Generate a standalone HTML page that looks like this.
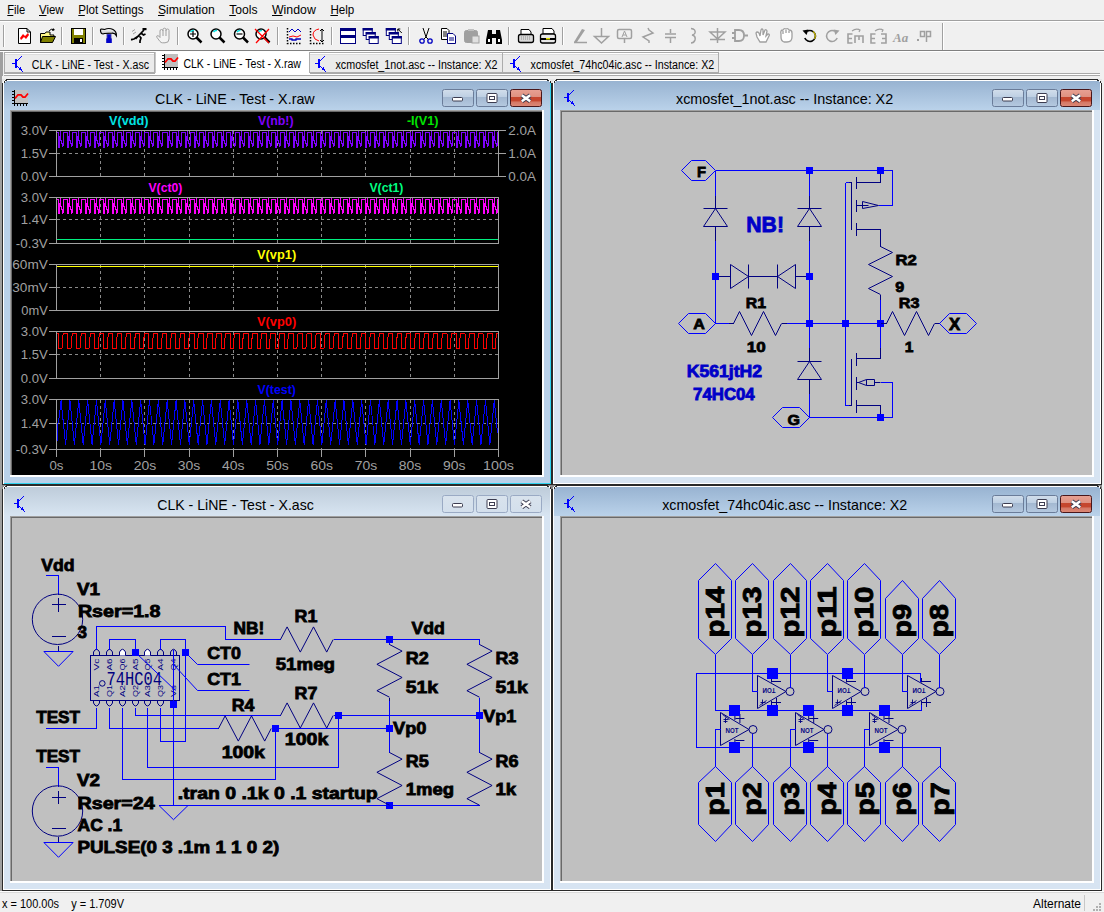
<!DOCTYPE html><html><head><meta charset="utf-8"><style>html,body{margin:0;padding:0;background:#F0F0F0;overflow:hidden}svg{display:block}</style></head><body><svg width="1104" height="912" viewBox="0 0 1104 912"><rect x="0" y="0" width="1104" height="912" fill="#F0F0F0" />
<text x="7.3" y="14" font-family="Liberation Sans" font-size="12" font-weight="normal" fill="#000" text-anchor="start" textLength="18" lengthAdjust="spacingAndGlyphs" >File</text>
<rect x="7.3" y="15" width="6" height="1" fill="#000" />
<text x="39" y="14" font-family="Liberation Sans" font-size="12" font-weight="normal" fill="#000" text-anchor="start" textLength="24.6" lengthAdjust="spacingAndGlyphs" >View</text>
<rect x="39" y="15" width="7.5" height="1" fill="#000" />
<text x="78.3" y="14" font-family="Liberation Sans" font-size="12" font-weight="normal" fill="#000" text-anchor="start" textLength="65.2" lengthAdjust="spacingAndGlyphs" >Plot Settings</text>
<rect x="78.3" y="15" width="6.5" height="1" fill="#000" />
<text x="158" y="14" font-family="Liberation Sans" font-size="12" font-weight="normal" fill="#000" text-anchor="start" textLength="56.8" lengthAdjust="spacingAndGlyphs" >Simulation</text>
<rect x="158" y="15" width="6.5" height="1" fill="#000" />
<text x="229.3" y="14" font-family="Liberation Sans" font-size="12" font-weight="normal" fill="#000" text-anchor="start" textLength="28.3" lengthAdjust="spacingAndGlyphs" >Tools</text>
<rect x="229.3" y="15" width="6.5" height="1" fill="#000" />
<text x="272" y="14" font-family="Liberation Sans" font-size="12" font-weight="normal" fill="#000" text-anchor="start" textLength="43.8" lengthAdjust="spacingAndGlyphs" >Window</text>
<rect x="272" y="15" width="10.5" height="1" fill="#000" />
<text x="330.4" y="14" font-family="Liberation Sans" font-size="12" font-weight="normal" fill="#000" text-anchor="start" textLength="23.9" lengthAdjust="spacingAndGlyphs" >Help</text>
<rect x="330.4" y="15" width="7.5" height="1" fill="#000" />
<rect x="0" y="20" width="1104" height="1" fill="#A0A0A0" />
<rect x="0" y="21" width="1104" height="1" fill="#FFFFFF" />
<rect x="3" y="25" width="1" height="22" fill="#A0A0A0" />
<rect x="4" y="25" width="1" height="22" fill="#FFFFFF" />
<rect x="61" y="27" width="1" height="18" fill="#A0A0A0" />
<rect x="62" y="27" width="1" height="18" fill="#FFFFFF" />
<rect x="92" y="27" width="1" height="18" fill="#A0A0A0" />
<rect x="93" y="27" width="1" height="18" fill="#FFFFFF" />
<rect x="123" y="27" width="1" height="18" fill="#A0A0A0" />
<rect x="124" y="27" width="1" height="18" fill="#FFFFFF" />
<rect x="177" y="27" width="1" height="18" fill="#A0A0A0" />
<rect x="178" y="27" width="1" height="18" fill="#FFFFFF" />
<rect x="277" y="27" width="1" height="18" fill="#A0A0A0" />
<rect x="278" y="27" width="1" height="18" fill="#FFFFFF" />
<rect x="331" y="27" width="1" height="18" fill="#A0A0A0" />
<rect x="332" y="27" width="1" height="18" fill="#FFFFFF" />
<rect x="408" y="27" width="1" height="18" fill="#A0A0A0" />
<rect x="409" y="27" width="1" height="18" fill="#FFFFFF" />
<rect x="508" y="27" width="1" height="18" fill="#A0A0A0" />
<rect x="509" y="27" width="1" height="18" fill="#FFFFFF" />
<rect x="562" y="27" width="1" height="18" fill="#A0A0A0" />
<rect x="563" y="27" width="1" height="18" fill="#FFFFFF" />
<rect x="942" y="23" width="1" height="27" fill="#A0A0A0" />
<rect x="943" y="23" width="1" height="27" fill="#FFFFFF" />
<rect x="0" y="50" width="1104" height="1" fill="#808080" />
<rect x="0" y="51" width="1104" height="1" fill="#FFFFFF" />
<g transform="translate(17,28)"><path d="M1.5 0.5 H10 L13.5 4 V15.5 H1.5 Z" fill="#fff" stroke="#000"/><path d="M10 0.5 V4 H13.5" fill="none" stroke="#000"/><path d="M3 10 L6 6 L8 8 L11 5 L12 7 L9 11 L7 9 L4 12 Z" fill="#f00"/></g>
<g transform="translate(40,28)"><path d="M0.5 5.5 H5 L6 4 H10 V7 H14 L12 14.5 H0.5 Z" fill="#fff88a" stroke="#000"/><path d="M2.5 8.5 H15.5 L12.5 14.5 H0.5 Z" fill="#808000" stroke="#000"/><path d="M9 3 Q11 0 14 2" fill="none" stroke="#000"/><path d="M13 0 L15 2 L12 3" fill="#000"/></g>
<g transform="translate(71,28)"><rect x="0.5" y="0.5" width="14" height="15" fill="#808000" stroke="#000"/><rect x="3" y="1" width="9" height="6" fill="#fff"/><rect x="3" y="10" width="9" height="5" fill="#000"/><rect x="9" y="11" width="2" height="3" fill="#fff"/></g>
<defs><linearGradient id="ghm" x1="0" y1="0" x2="0" y2="1"><stop offset="0" stop-color="#fff"/><stop offset="1" stop-color="#a8a8a8"/></linearGradient></defs>
<g transform="translate(100,28)"><path d="M0.5 2 Q0.8 0.6 2.5 1.2 L4.5 1.5 Q9 -0.5 13 1.5 Q16.6 3.5 16.4 7.6 Q15 5 12 5.2 L4.5 5.5 Q3 6.3 1.5 5.5 Q0.4 4.5 0.5 2 Z" fill="url(#ghm)" stroke="#000" stroke-width="1.2"/><rect x="7.2" y="6.2" width="3.6" height="5" fill="#0000c8"/><rect x="6.2" y="10.5" width="5.6" height="4.5" fill="#0000c8"/><path d="M7 6 V11 M11 6 V11" stroke="#000080" stroke-width="0.6"/></g>
<g transform="translate(131,28)"><rect x="11.5" y="0" width="4" height="2.2" fill="#000"/><path d="M13 2 L4.5 10.8 M7.5 8 L3 11 L0.8 11.5 V12.5 M8.5 8.2 L10 10 L9 13 V15 M10.5 5.5 L12.5 7 L14.5 6" fill="none" stroke="#000" stroke-width="1.7"/><path d="M1 3.5 L4 1.5 M2 6 L5 4" stroke="#a0a0a0" stroke-width="1"/></g>
<g transform="translate(156,28)"><path d="M4 8.5 V3 Q4 1.5 5.5 1.5 Q7 1.5 7 3 V1.5 Q7 0.2 8.5 0.2 Q10 0.2 10 1.5 V2.5 Q10 1 11.5 1 Q13 1 13 2.5 V11 Q13 14.8 9 14.8 H6.5 Q5 14.8 4 13.5 L0.8 9.2 Q0.3 7.6 1.8 7.6 Q2.8 7.6 4 9.5 Z M7 3 V8 M10 2 V8" fill="#F4F4F4" stroke="#a0a0a0" stroke-width="1"/></g>
<g transform="translate(187,28)"><circle cx="6" cy="6" r="5" fill="#fff" stroke="#000" stroke-width="1.5"/><path d="M3.5 4 Q5 2 7 2.5" stroke="#00e0e0" stroke-width="1.5" fill="none"/><path d="M9.5 9.5 L14.5 14.5" stroke="#000" stroke-width="2.5"/><path d="M3 6 H9 M6 3 V9" stroke="#000" stroke-width="1.2"/></g>
<g transform="translate(210,28)"><circle cx="6" cy="6" r="5" fill="#fff" stroke="#000" stroke-width="1.5"/><path d="M3.5 4 Q5 2 7 2.5" stroke="#00e0e0" stroke-width="1.5" fill="none"/><path d="M9.5 9.5 L14.5 14.5" stroke="#000" stroke-width="2.5"/></g>
<g transform="translate(233.5,28)"><circle cx="6" cy="6" r="5" fill="#fff" stroke="#000" stroke-width="1.5"/><path d="M3.5 4 Q5 2 7 2.5" stroke="#00e0e0" stroke-width="1.5" fill="none"/><path d="M9.5 9.5 L14.5 14.5" stroke="#000" stroke-width="2.5"/><path d="M3 6 H9" stroke="#000" stroke-width="1.2"/></g>
<g transform="translate(255,28)"><circle cx="6" cy="6" r="5" fill="#fff" stroke="#000" stroke-width="1.5"/><path d="M3.5 4 Q5 2 7 2.5" stroke="#00e0e0" stroke-width="1.5" fill="none"/><path d="M9.5 9.5 L14.5 14.5" stroke="#000" stroke-width="2.5"/><path d="M0 1 L14 15 M14 1 L1 15" stroke="#f00" stroke-width="1.3"/></g>
<g transform="translate(286,28)"><path d="M1.5 0 V15.5 H16" stroke="#000" stroke-dasharray="1.5,1.5" stroke-width="1.5" fill="none"/><path d="M3 4 L6 1 L9 4 L12 1 L15 4" stroke="#0000c0" fill="none"/><path d="M3 9 L7 8 L11 9 L15 7" stroke="#f00" fill="none"/><path d="M3 11 H6 V12 H10 V11 H15" stroke="#0000c0" fill="none" stroke-width="1.3"/></g>
<g transform="translate(309,28)"><path d="M1.5 0 V15.5 H16" stroke="#000" stroke-dasharray="1.5,1.5" stroke-width="1.5" fill="none"/><path d="M10 1 Q4 2 4 7 Q5 12 10 13" stroke="#f00" fill="none"/><path d="M13 1 V14 M11 3 L13 1 L15 3 M11 12 L13 14 L15 12" stroke="#000" fill="none"/></g>
<g transform="translate(340,28)"><rect x="0.5" y="0.5" width="15" height="15" fill="#fff" stroke="#00007f"/><rect x="0" y="0" width="16" height="3" fill="#00007f"/><rect x="0" y="7" width="16" height="3" fill="#00007f"/></g>
<g transform="translate(362.7,28)"><rect x="0.5" y="0.5" width="9" height="7" fill="#fff" stroke="#00007f"/><rect x="0" y="0" width="10" height="2.5" fill="#00007f"/><rect x="3.5" y="4.5" width="9" height="7" fill="#fff" stroke="#00007f"/><rect x="3" y="4" width="10" height="2.5" fill="#00007f"/><rect x="6.5" y="8.5" width="9" height="7" fill="#fff" stroke="#00007f"/><rect x="6" y="8" width="10" height="2.5" fill="#00007f"/></g>
<g transform="translate(385.8,28)"><rect x="0.5" y="0.5" width="9" height="7" fill="#fff" stroke="#00007f"/><rect x="0" y="0" width="10" height="2.5" fill="#00007f"/><rect x="3.5" y="4.5" width="9" height="7" fill="#fff" stroke="#00007f"/><rect x="3" y="4" width="10" height="2.5" fill="#00007f"/><rect x="6.5" y="8.5" width="9" height="7" fill="#fff" stroke="#00007f"/><rect x="6" y="8" width="10" height="2.5" fill="#00007f"/><path d="M12 1 L16 5 M12 1 H14.5 M12 1 V3.5" stroke="#000" fill="none"/></g>
<g transform="translate(419,28)"><path d="M4 0 L7 9 M10 0 L7 9 L4 12 M7 9 L10 12" stroke="#000" fill="none"/><circle cx="3" cy="13" r="2.2" fill="none" stroke="#0000c0" stroke-width="1.3"/><circle cx="11" cy="13" r="2.2" fill="none" stroke="#0000c0" stroke-width="1.3"/></g>
<g transform="translate(441,28)"><path d="M0.5 0.5 H6 L8 2.5 V11.5 H0.5 Z" fill="#fff" stroke="#000"/><path d="M2 4 H6 M2 6 H6 M2 8 H6" stroke="#000"/><path d="M6.5 5.5 H12 L14.5 8 V15.5 H6.5 Z" fill="#fff" stroke="#00007f"/><path d="M8 10 H13 M8 12 H13" stroke="#00007f"/></g>
<g transform="translate(464,28)"><rect x="0.5" y="2.5" width="13" height="12" rx="2" fill="#a0a0a0" stroke="#a0a0a0"/><rect x="4" y="1" width="6" height="2" fill="#c0c0c0"/><rect x="8" y="8" width="7" height="7" fill="#e0e0e0" stroke="#a0a0a0"/></g>
<g transform="translate(486,28)"><path d="M2 2 H6 V6 H10 V2 H14 L16 12 V16 H10 V10 H6 V16 H0 V12 Z" fill="#000"/><rect x="2" y="11" width="2" height="3" fill="#fff"/><rect x="12" y="11" width="2" height="3" fill="#fff"/></g>
<g transform="translate(518,28)"><path d="M3 1.5 H11 L13 4 V7 H3 Z" fill="#fff" stroke="#000"/><rect x="0.5" y="6.5" width="15" height="8" rx="2" fill="#d8d8d8" stroke="#000" stroke-width="1.3"/><path d="M3 9 H13 M3 11 H13" stroke="#909090" stroke-dasharray="1,1"/></g>
<g transform="translate(540,28)"><path d="M3 0.5 H12 L14 3 V6 H3 Z" fill="#fff" stroke="#000"/><rect x="0.5" y="6" width="15" height="9" rx="2" fill="#e8e8e8" stroke="#000" stroke-width="1.3"/><rect x="1" y="10" width="14" height="2" fill="#000"/><rect x="6" y="10" width="4" height="1.5" fill="#e0e000"/></g>
<g transform="translate(573,28)"><path d="M1 14 L9 1 L12 2 L4 14 Z" fill="#a0a0a0"/><path d="M1 14.5 H14" stroke="#a0a0a0" stroke-width="1.5"/></g>
<g transform="translate(594,28)"><path d="M7.5 0 V8 M0.5 8.5 H14.5 L7.5 15 Z" stroke="#a0a0a0" fill="none" stroke-width="1.5"/></g>
<g transform="translate(617,28)"><rect x="0.5" y="1.5" width="14" height="9" rx="1.5" fill="none" stroke="#a0a0a0" stroke-width="1.5"/><path d="M5 9 L7.5 3 L10 9 M6 7 H9" stroke="#a0a0a0" fill="none"/><path d="M7.5 11 V15" stroke="#a0a0a0" stroke-width="1.5"/></g>
<g transform="translate(642,28)"><path d="M6 0 L7 2 L11 5 L1 9 L7 13 L7 15" stroke="#a0a0a0" fill="none" stroke-width="1.5"/></g>
<g transform="translate(665,28)"><path d="M5.5 1 V5 M0 6 H11 M0 9.5 H11 M5.5 10 V15" stroke="#a0a0a0" fill="none" stroke-width="1.5"/></g>
<g transform="translate(690,28)"><path d="M1 0.5 Q6 1 5 5 Q4 7 2 7 Q6 8 5 12 Q4 15 1 15" stroke="#a0a0a0" fill="none" stroke-width="1.5"/></g>
<g transform="translate(710,28)"><path d="M7.5 0 V15 M0 4 H15 L7.5 11 Z M0 11.5 H15" stroke="#a0a0a0" fill="none" stroke-width="1.5"/></g>
<g transform="translate(732,28)"><path d="M3 2 H7 Q12 2 12 7.5 Q12 13 7 13 H3 Z M0 5 H3 M0 10 H3 M12 7.5 H16" stroke="#a0a0a0" fill="none" stroke-width="1.8"/></g>
<g transform="translate(755,28)"><path d="M2 9 L1 5 Q2 3 4 5 L5 8 L6 2 Q7 0 8 2 V7 L10 2 Q11 1 12 3 L11 8 L13 6 Q15 6 14 8 L11 14 H5 Z" fill="#fff" stroke="#a0a0a0" stroke-width="1.3"/></g>
<g transform="translate(779,28)"><path d="M2 6 Q1 2 4 2 Q5 0 7 1 Q9 0 10 2 Q13 2 13 5 V9 Q13 14 8 14 H5 Q2 13 2 9 Z M4 6 V3 M7 5 V2 M10 5 V3" fill="#fff" stroke="#a0a0a0" stroke-width="1.3"/></g>
<g transform="translate(802,28)"><path d="M5.2 3.2 A5.5 5.5 0 1 1 2.8 10" stroke="#000" fill="none" stroke-width="1.6"/><path d="M11 3.5 A5.5 5.5 0 0 1 12.5 11" stroke="#d0c000" fill="none" stroke-width="1.2"/><path d="M0.5 2.5 L6.5 1.5 L4.5 7 Z" fill="#000"/></g>
<g transform="translate(825,28)"><path d="M9.8 3.2 A5.5 5.5 0 1 0 12.2 10" stroke="#a0a0a0" fill="none" stroke-width="1.5"/><path d="M14.5 2.5 L8.5 1.5 L10.5 7 Z" fill="#a0a0a0"/></g>
<g transform="translate(847,28)"><path d="M5 3 Q9 0 13 2 M11 1 L13 2 L12 4" stroke="#a0a0a0" fill="none" stroke-width="1.2"/><path d="M5.5 6 H1 V15 H5.5 M1 10.5 H5 M8 15 V8 H16 V15 M12 8 V12" stroke="#a0a0a0" fill="none" stroke-width="1.6"/></g>
<g transform="translate(870,28)"><path d="M5 3 Q9 0 13 2 M11 1 L13 2 L12 4" stroke="#a0a0a0" fill="none" stroke-width="1.2"/><path d="M5.5 6 H1 V15 H5.5 M1 10.5 H5 M11 6 H16 V15 H11 M12 10.5 H16" stroke="#a0a0a0" fill="none" stroke-width="1.6"/></g>
<g transform="translate(893,28)"><text x="0" y="14" font-family="Liberation Serif" font-style="italic" font-weight="bold" font-size="13" fill="#a0a0a0">Aa</text></g>
<g transform="translate(917,28)"><rect x="0" y="11" width="2" height="2" fill="#a0a0a0"/><rect x="3.5" y="3.5" width="4" height="5" fill="none" stroke="#a0a0a0" stroke-width="1.5"/><path d="M9.5 14 V3.5 H13.5 V8.5 H9.5" fill="none" stroke="#a0a0a0" stroke-width="1.5"/></g>
<rect x="2" y="52" width="1" height="24" fill="#A0A0A0" />
<rect x="4" y="73" width="1096" height="3" fill="#FFFFFF" />
<rect x="4" y="73" width="1096" height="1" fill="#A9A9A9" />
<rect x="4" y="75" width="1096" height="1" fill="#A9A9A9" />
<rect x="4" y="52" width="151" height="21" fill="#ACACAC" />
<rect x="5" y="53" width="149" height="19" fill="#FFFFFF" />
<rect x="5" y="55" width="149" height="17" fill="#EBEBEB" />
<rect x="5" y="54" width="149" height="1" fill="#DCDCDC" />
<rect x="155" y="52" width="155" height="22" fill="#FFFFFF" />
<rect x="155" y="52" width="1" height="21" fill="#C8C8C8" />
<rect x="309" y="52" width="1" height="21" fill="#C8C8C8" />
<rect x="309" y="52" width="194" height="21" fill="#ACACAC" />
<rect x="310" y="53" width="192" height="19" fill="#FFFFFF" />
<rect x="310" y="55" width="192" height="17" fill="#EBEBEB" />
<rect x="310" y="54" width="192" height="1" fill="#DCDCDC" />
<rect x="502" y="52" width="217" height="21" fill="#ACACAC" />
<rect x="503" y="53" width="215" height="19" fill="#FFFFFF" />
<rect x="503" y="55" width="215" height="17" fill="#EBEBEB" />
<rect x="503" y="54" width="215" height="1" fill="#DCDCDC" />
<g transform="translate(12,56)" fill="#0000ff" shape-rendering="crispEdges"><rect x="3" y="3" width="2" height="9"/><rect x="0" y="7" width="3" height="1"/><rect x="5" y="4" width="1" height="1"/><rect x="6" y="3" width="1" height="1"/><rect x="7" y="2" width="1" height="1"/><rect x="8" y="1" width="1" height="1"/><rect x="9" y="0" width="1" height="1"/><rect x="5" y="10" width="1" height="1"/><rect x="6" y="11" width="1" height="1"/><rect x="7" y="12" width="1" height="1"/><rect x="8" y="11" width="1" height="3"/><rect x="7" y="13" width="3" height="1"/><rect x="9" y="13" width="1" height="2"/><rect x="10" y="15" width="1" height="1"/></g>
<text x="31.8" y="69" font-family="Liberation Sans" font-size="12" font-weight="normal" fill="#000" text-anchor="start" textLength="117.2" lengthAdjust="spacingAndGlyphs" >CLK - LiNE - Test - X.asc</text>
<g transform="translate(162,54)"><rect x="3" y="0" width="13" height="13" fill="#c0c0c0"/><g fill="#000" shape-rendering="crispEdges"><rect x="2" y="0" width="1" height="14"/><rect x="0" y="13" width="16" height="1"/><rect x="0" y="1" width="2" height="1"/><rect x="0" y="4" width="2" height="1"/><rect x="0" y="7" width="2" height="1"/><rect x="0" y="10" width="2" height="1"/><rect x="2" y="14" width="1" height="2"/><rect x="5" y="14" width="1" height="2"/><rect x="8" y="14" width="1" height="2"/><rect x="11" y="14" width="1" height="2"/><rect x="14" y="14" width="1" height="2"/></g><path d="M3 8.5 L6 4.8 H9 L11 7.2 H13 L16 3.5" stroke="#f00" stroke-width="1.8" fill="none"/></g>
<text x="183.4" y="68" font-family="Liberation Sans" font-size="12" font-weight="normal" fill="#000" text-anchor="start" textLength="117.6" lengthAdjust="spacingAndGlyphs" >CLK - LiNE - Test - X.raw</text>
<g transform="translate(315,56)" fill="#0000ff" shape-rendering="crispEdges"><rect x="3" y="3" width="2" height="9"/><rect x="0" y="7" width="3" height="1"/><rect x="5" y="4" width="1" height="1"/><rect x="6" y="3" width="1" height="1"/><rect x="7" y="2" width="1" height="1"/><rect x="8" y="1" width="1" height="1"/><rect x="9" y="0" width="1" height="1"/><rect x="5" y="10" width="1" height="1"/><rect x="6" y="11" width="1" height="1"/><rect x="7" y="12" width="1" height="1"/><rect x="8" y="11" width="1" height="3"/><rect x="7" y="13" width="3" height="1"/><rect x="9" y="13" width="1" height="2"/><rect x="10" y="15" width="1" height="1"/></g>
<text x="335.5" y="69" font-family="Liberation Sans" font-size="12" font-weight="normal" fill="#000" text-anchor="start" textLength="162" lengthAdjust="spacingAndGlyphs" >xcmosfet_1not.asc -- Instance: X2</text>
<g transform="translate(510,56)" fill="#0000ff" shape-rendering="crispEdges"><rect x="3" y="3" width="2" height="9"/><rect x="0" y="7" width="3" height="1"/><rect x="5" y="4" width="1" height="1"/><rect x="6" y="3" width="1" height="1"/><rect x="7" y="2" width="1" height="1"/><rect x="8" y="1" width="1" height="1"/><rect x="9" y="0" width="1" height="1"/><rect x="5" y="10" width="1" height="1"/><rect x="6" y="11" width="1" height="1"/><rect x="7" y="12" width="1" height="1"/><rect x="8" y="11" width="1" height="3"/><rect x="7" y="13" width="3" height="1"/><rect x="9" y="13" width="1" height="2"/><rect x="10" y="15" width="1" height="1"/></g>
<text x="530.6" y="69" font-family="Liberation Sans" font-size="12" font-weight="normal" fill="#000" text-anchor="start" textLength="183.7" lengthAdjust="spacingAndGlyphs" >xcmosfet_74hc04ic.asc -- Instance: X2</text>
<defs><linearGradient id="gact" x1="0" y1="0" x2="0" y2="1"><stop offset="0" stop-color="#98B3D1"/><stop offset="1" stop-color="#BAD2EA"/></linearGradient><linearGradient id="ginact" x1="0" y1="0" x2="0" y2="1"><stop offset="0" stop-color="#BECCDA"/><stop offset="1" stop-color="#D8E5F2"/></linearGradient><linearGradient id="gclose" x1="0" y1="0" x2="0" y2="1"><stop offset="0" stop-color="#E8A193"/><stop offset="0.45" stop-color="#DE9080"/><stop offset="0.46" stop-color="#C5462E"/><stop offset="0.7" stop-color="#C5462E"/><stop offset="0.71" stop-color="#D47563"/><stop offset="1" stop-color="#DC8A78"/></linearGradient><linearGradient id="gbtn" x1="0" y1="0" x2="0" y2="1"><stop offset="0" stop-color="#D2DEEB"/><stop offset="0.45" stop-color="#BDCFE3"/><stop offset="0.46" stop-color="#A3B8D1"/><stop offset="1" stop-color="#B5C9E0"/></linearGradient><linearGradient id="gbtni" x1="0" y1="0" x2="0" y2="1"><stop offset="0" stop-color="#D9E3ED"/><stop offset="1" stop-color="#D3DFEC"/></linearGradient></defs>
<rect x="2" y="79" width="550" height="406" fill="#2A2A2A" />
<rect x="3" y="80" width="548" height="404" fill="#FFFFFF" />
<rect x="4" y="81" width="546" height="402" fill="#B9D1EA" />
<rect x="550" y="82" width="1" height="402" fill="#2ED3F0" />
<rect x="4" y="483" width="547" height="1" fill="#2ED3F0" />
<rect x="4" y="81" width="546" height="29" fill="url(#gact)" />
<rect x="10" y="110" width="534" height="367" fill="#FFFFFF" />
<rect x="10" y="110" width="532" height="365" fill="#A0A0A0" />
<rect x="11" y="111" width="531" height="364" fill="#696969" />
<rect x="12" y="112" width="530" height="363" fill="#000000" />
<g transform="translate(12,90)"><rect x="3" y="0" width="13" height="13" fill="#c0c0c0"/><g fill="#000" shape-rendering="crispEdges"><rect x="2" y="0" width="1" height="14"/><rect x="0" y="13" width="16" height="1"/><rect x="0" y="1" width="2" height="1"/><rect x="0" y="4" width="2" height="1"/><rect x="0" y="7" width="2" height="1"/><rect x="0" y="10" width="2" height="1"/><rect x="2" y="14" width="1" height="2"/><rect x="5" y="14" width="1" height="2"/><rect x="8" y="14" width="1" height="2"/><rect x="11" y="14" width="1" height="2"/><rect x="14" y="14" width="1" height="2"/></g><path d="M3 8.5 L6 4.8 H9 L11 7.2 H13 L16 3.5" stroke="#f00" stroke-width="1.8" fill="none"/></g>
<text x="155.1" y="103.6" font-family="Liberation Sans" font-size="15" font-weight="normal" fill="#000" text-anchor="start" textLength="159.6" lengthAdjust="spacingAndGlyphs" >CLK - LiNE - Test - X.raw</text>
<rect x="442.5" y="89.5" width="31" height="17" rx="2" fill="url(#gbtn)" stroke="#6A7C99"/>
<rect x="452.5" y="97.5" width="10" height="3.5" rx="1" fill="#fff" stroke="#3C3C50"/>
<rect x="476.5" y="89.5" width="31" height="17" rx="2" fill="url(#gbtn)" stroke="#6A7C99"/>
<rect x="487" y="93.5" width="10" height="9" rx="1" fill="#fff" stroke="#3C3C50"/><rect x="489.5" y="96.5" width="5" height="3" fill="none" stroke="#3C3C50"/>
<rect x="510.5" y="89.5" width="31" height="17" rx="2" fill="url(#gclose)" stroke="#48171B"/>
<path d="M521.8 95.2 L530.2 101.2 M530.2 95.2 L521.8 101.2" stroke="#3C3C50" stroke-width="4.4" stroke-linecap="butt"/><path d="M521.8 95.2 L530.2 101.2 M530.2 95.2 L521.8 101.2" stroke="#fff" stroke-width="2.6" stroke-linecap="butt"/>
<rect x="552" y="79" width="550" height="406" fill="#2A2A2A" />
<rect x="553" y="80" width="548" height="404" fill="#FFFFFF" />
<rect x="554" y="81" width="546" height="402" fill="#D7E4F2" />
<rect x="554" y="81" width="546" height="29" fill="url(#gact)" />
<rect x="560" y="110" width="534" height="367" fill="#FFFFFF" />
<rect x="560" y="110" width="532" height="365" fill="#A0A0A0" />
<rect x="561" y="111" width="531" height="364" fill="#696969" />
<rect x="562" y="112" width="530" height="363" fill="#C0C0C0" />
<g transform="translate(564,90)" fill="#0000ff" shape-rendering="crispEdges"><rect x="3" y="3" width="2" height="9"/><rect x="0" y="7" width="3" height="1"/><rect x="5" y="4" width="1" height="1"/><rect x="6" y="3" width="1" height="1"/><rect x="7" y="2" width="1" height="1"/><rect x="8" y="1" width="1" height="1"/><rect x="9" y="0" width="1" height="1"/><rect x="5" y="10" width="1" height="1"/><rect x="6" y="11" width="1" height="1"/><rect x="7" y="12" width="1" height="1"/><rect x="8" y="11" width="1" height="3"/><rect x="7" y="13" width="3" height="1"/><rect x="9" y="13" width="1" height="2"/><rect x="10" y="15" width="1" height="1"/></g>
<text x="676" y="103.6" font-family="Liberation Sans" font-size="15" font-weight="normal" fill="#000" text-anchor="start" textLength="217.2" lengthAdjust="spacingAndGlyphs" >xcmosfet_1not.asc -- Instance: X2</text>
<rect x="992.5" y="89.5" width="31" height="17" rx="2" fill="url(#gbtn)" stroke="#6A7C99"/>
<rect x="1002.5" y="97.5" width="10" height="3.5" rx="1" fill="#fff" stroke="#3C3C50"/>
<rect x="1026.5" y="89.5" width="31" height="17" rx="2" fill="url(#gbtn)" stroke="#6A7C99"/>
<rect x="1037" y="93.5" width="10" height="9" rx="1" fill="#fff" stroke="#3C3C50"/><rect x="1039.5" y="96.5" width="5" height="3" fill="none" stroke="#3C3C50"/>
<rect x="1060.5" y="89.5" width="31" height="17" rx="2" fill="url(#gclose)" stroke="#48171B"/>
<path d="M1071.8 95.2 L1080.2 101.2 M1080.2 95.2 L1071.8 101.2" stroke="#3C3C50" stroke-width="4.4" stroke-linecap="butt"/><path d="M1071.8 95.2 L1080.2 101.2 M1080.2 95.2 L1071.8 101.2" stroke="#fff" stroke-width="2.6" stroke-linecap="butt"/>
<rect x="2" y="485" width="550" height="406" fill="#2A2A2A" />
<rect x="3" y="486" width="548" height="404" fill="#FFFFFF" />
<rect x="4" y="487" width="546" height="402" fill="#D7E4F2" />
<rect x="4" y="487" width="546" height="29" fill="url(#ginact)" />
<rect x="10" y="516" width="534" height="367" fill="#FFFFFF" />
<rect x="10" y="516" width="532" height="365" fill="#A0A0A0" />
<rect x="11" y="517" width="531" height="364" fill="#696969" />
<rect x="12" y="518" width="530" height="363" fill="#C0C0C0" />
<g transform="translate(14,496)" fill="#0000ff" shape-rendering="crispEdges"><rect x="3" y="3" width="2" height="9"/><rect x="0" y="7" width="3" height="1"/><rect x="5" y="4" width="1" height="1"/><rect x="6" y="3" width="1" height="1"/><rect x="7" y="2" width="1" height="1"/><rect x="8" y="1" width="1" height="1"/><rect x="9" y="0" width="1" height="1"/><rect x="5" y="10" width="1" height="1"/><rect x="6" y="11" width="1" height="1"/><rect x="7" y="12" width="1" height="1"/><rect x="8" y="11" width="1" height="3"/><rect x="7" y="13" width="3" height="1"/><rect x="9" y="13" width="1" height="2"/><rect x="10" y="15" width="1" height="1"/></g>
<text x="157.2" y="509.6" font-family="Liberation Sans" font-size="15" font-weight="normal" fill="#000" text-anchor="start" textLength="156.6" lengthAdjust="spacingAndGlyphs" >CLK - LiNE - Test - X.asc</text>
<rect x="442.5" y="495.5" width="31" height="17" rx="2" fill="url(#gbtni)" stroke="#9AAAC4"/>
<rect x="452.5" y="503.5" width="10" height="3.5" rx="1" fill="#fff" stroke="#3C3C50"/>
<rect x="476.5" y="495.5" width="31" height="17" rx="2" fill="url(#gbtni)" stroke="#9AAAC4"/>
<rect x="487" y="499.5" width="10" height="9" rx="1" fill="#fff" stroke="#3C3C50"/><rect x="489.5" y="502.5" width="5" height="3" fill="none" stroke="#3C3C50"/>
<rect x="510.5" y="495.5" width="31" height="17" rx="2" fill="url(#gbtni)" stroke="#9AAAC4"/>
<path d="M521.8 501.2 L530.2 507.2 M530.2 501.2 L521.8 507.2" stroke="#3C3C50" stroke-width="4.4" stroke-linecap="butt"/><path d="M521.8 501.2 L530.2 507.2 M530.2 501.2 L521.8 507.2" stroke="#fff" stroke-width="2.6" stroke-linecap="butt"/>
<rect x="552" y="485" width="550" height="406" fill="#2A2A2A" />
<rect x="553" y="486" width="548" height="404" fill="#FFFFFF" />
<rect x="554" y="487" width="546" height="402" fill="#D7E4F2" />
<rect x="554" y="487" width="546" height="29" fill="url(#gact)" />
<rect x="560" y="516" width="534" height="367" fill="#FFFFFF" />
<rect x="560" y="516" width="532" height="365" fill="#A0A0A0" />
<rect x="561" y="517" width="531" height="364" fill="#696969" />
<rect x="562" y="518" width="530" height="363" fill="#C0C0C0" />
<g transform="translate(564,496)" fill="#0000ff" shape-rendering="crispEdges"><rect x="3" y="3" width="2" height="9"/><rect x="0" y="7" width="3" height="1"/><rect x="5" y="4" width="1" height="1"/><rect x="6" y="3" width="1" height="1"/><rect x="7" y="2" width="1" height="1"/><rect x="8" y="1" width="1" height="1"/><rect x="9" y="0" width="1" height="1"/><rect x="5" y="10" width="1" height="1"/><rect x="6" y="11" width="1" height="1"/><rect x="7" y="12" width="1" height="1"/><rect x="8" y="11" width="1" height="3"/><rect x="7" y="13" width="3" height="1"/><rect x="9" y="13" width="1" height="2"/><rect x="10" y="15" width="1" height="1"/></g>
<text x="662.2" y="509.6" font-family="Liberation Sans" font-size="15" font-weight="normal" fill="#000" text-anchor="start" textLength="245.1" lengthAdjust="spacingAndGlyphs" >xcmosfet_74hc04ic.asc -- Instance: X2</text>
<rect x="992.5" y="495.5" width="31" height="17" rx="2" fill="url(#gbtn)" stroke="#6A7C99"/>
<rect x="1002.5" y="503.5" width="10" height="3.5" rx="1" fill="#fff" stroke="#3C3C50"/>
<rect x="1026.5" y="495.5" width="31" height="17" rx="2" fill="url(#gbtn)" stroke="#6A7C99"/>
<rect x="1037" y="499.5" width="10" height="9" rx="1" fill="#fff" stroke="#3C3C50"/><rect x="1039.5" y="502.5" width="5" height="3" fill="none" stroke="#3C3C50"/>
<rect x="1060.5" y="495.5" width="31" height="17" rx="2" fill="url(#gclose)" stroke="#48171B"/>
<path d="M1071.8 501.2 L1080.2 507.2 M1080.2 501.2 L1071.8 507.2" stroke="#3C3C50" stroke-width="4.4" stroke-linecap="butt"/><path d="M1071.8 501.2 L1080.2 507.2 M1080.2 501.2 L1071.8 507.2" stroke="#fff" stroke-width="2.6" stroke-linecap="butt"/>
<rect x="0" y="52" width="2" height="840" fill="#A0A0A0" />
<rect x="2" y="79" width="4" height="1" fill="#E6E6E6" />
<rect x="2" y="80" width="2" height="1" fill="#E6E6E6" />
<rect x="2" y="81" width="1" height="2" fill="#E6E6E6" />
<rect x="5" y="80" width="2" height="1" fill="#2A2A2A" />
<rect x="4" y="81" width="1" height="2" fill="#2A2A2A" />
<rect x="5" y="81" width="1" height="1" fill="#FFFFFF" />
<rect x="548" y="79" width="4" height="1" fill="#E6E6E6" />
<rect x="550" y="80" width="2" height="1" fill="#E6E6E6" />
<rect x="551" y="81" width="1" height="2" fill="#E6E6E6" />
<rect x="547" y="80" width="2" height="1" fill="#2A2A2A" />
<rect x="550" y="81" width="1" height="2" fill="#2A2A2A" />
<rect x="549" y="81" width="1" height="1" fill="#FFFFFF" />
<rect x="552" y="79" width="4" height="1" fill="#E6E6E6" />
<rect x="552" y="80" width="2" height="1" fill="#E6E6E6" />
<rect x="552" y="81" width="1" height="2" fill="#E6E6E6" />
<rect x="555" y="80" width="2" height="1" fill="#2A2A2A" />
<rect x="554" y="81" width="1" height="2" fill="#2A2A2A" />
<rect x="555" y="81" width="1" height="1" fill="#FFFFFF" />
<rect x="1098" y="79" width="4" height="1" fill="#E6E6E6" />
<rect x="1100" y="80" width="2" height="1" fill="#E6E6E6" />
<rect x="1101" y="81" width="1" height="2" fill="#E6E6E6" />
<rect x="1097" y="80" width="2" height="1" fill="#2A2A2A" />
<rect x="1100" y="81" width="1" height="2" fill="#2A2A2A" />
<rect x="1099" y="81" width="1" height="1" fill="#FFFFFF" />
<rect x="2" y="485" width="4" height="1" fill="#8A8A8A" />
<rect x="2" y="486" width="2" height="1" fill="#8A8A8A" />
<rect x="2" y="487" width="1" height="2" fill="#8A8A8A" />
<rect x="5" y="486" width="2" height="1" fill="#2A2A2A" />
<rect x="4" y="487" width="1" height="2" fill="#2A2A2A" />
<rect x="5" y="487" width="1" height="1" fill="#FFFFFF" />
<rect x="548" y="485" width="4" height="1" fill="#8A8A8A" />
<rect x="550" y="486" width="2" height="1" fill="#8A8A8A" />
<rect x="551" y="487" width="1" height="2" fill="#8A8A8A" />
<rect x="547" y="486" width="2" height="1" fill="#2A2A2A" />
<rect x="550" y="487" width="1" height="2" fill="#2A2A2A" />
<rect x="549" y="487" width="1" height="1" fill="#FFFFFF" />
<rect x="552" y="485" width="4" height="1" fill="#8A8A8A" />
<rect x="552" y="486" width="2" height="1" fill="#8A8A8A" />
<rect x="552" y="487" width="1" height="2" fill="#8A8A8A" />
<rect x="555" y="486" width="2" height="1" fill="#2A2A2A" />
<rect x="554" y="487" width="1" height="2" fill="#2A2A2A" />
<rect x="555" y="487" width="1" height="1" fill="#FFFFFF" />
<rect x="1098" y="485" width="4" height="1" fill="#8A8A8A" />
<rect x="1100" y="486" width="2" height="1" fill="#8A8A8A" />
<rect x="1101" y="487" width="1" height="2" fill="#8A8A8A" />
<rect x="1097" y="486" width="2" height="1" fill="#2A2A2A" />
<rect x="1100" y="487" width="1" height="2" fill="#2A2A2A" />
<rect x="1099" y="487" width="1" height="1" fill="#FFFFFF" />
<rect x="0" y="891" width="1104" height="1" fill="#FFFFFF" />
<rect x="0" y="892" width="1104" height="1" fill="#DADADA" />
<text x="2" y="908" font-family="Liberation Sans" font-size="12" font-weight="normal" fill="#000" text-anchor="start" textLength="122" lengthAdjust="spacingAndGlyphs" xml:space="preserve">x = 100.00s    y = 1.709V</text>
<text x="1033" y="908" font-family="Liberation Sans" font-size="12" font-weight="normal" fill="#000" text-anchor="start" textLength="48" lengthAdjust="spacingAndGlyphs" >Alternate</text>
<rect x="1084" y="895" width="1" height="16" fill="#C8C8C8" />
<rect x="1099" y="903" width="2" height="2" fill="#B0B0B0" />
<rect x="1096" y="906" width="2" height="2" fill="#B0B0B0" />
<rect x="1099" y="906" width="2" height="2" fill="#B0B0B0" />
<rect x="1093" y="909" width="2" height="2" fill="#B0B0B0" />
<rect x="1096" y="909" width="2" height="2" fill="#B0B0B0" />
<rect x="1099" y="909" width="2" height="2" fill="#B0B0B0" />
<g shape-rendering="crispEdges">
<line x1="100.5" y1="131" x2="100.5" y2="176" stroke="#8A8A8A" stroke-width="1" stroke-dasharray="3,3"/>
<line x1="144.5" y1="131" x2="144.5" y2="176" stroke="#8A8A8A" stroke-width="1" stroke-dasharray="3,3"/>
<line x1="189.5" y1="131" x2="189.5" y2="176" stroke="#8A8A8A" stroke-width="1" stroke-dasharray="3,3"/>
<line x1="233.5" y1="131" x2="233.5" y2="176" stroke="#8A8A8A" stroke-width="1" stroke-dasharray="3,3"/>
<line x1="277.5" y1="131" x2="277.5" y2="176" stroke="#8A8A8A" stroke-width="1" stroke-dasharray="3,3"/>
<line x1="321.5" y1="131" x2="321.5" y2="176" stroke="#8A8A8A" stroke-width="1" stroke-dasharray="3,3"/>
<line x1="365.5" y1="131" x2="365.5" y2="176" stroke="#8A8A8A" stroke-width="1" stroke-dasharray="3,3"/>
<line x1="410.5" y1="131" x2="410.5" y2="176" stroke="#8A8A8A" stroke-width="1" stroke-dasharray="3,3"/>
<line x1="454.5" y1="131" x2="454.5" y2="176" stroke="#8A8A8A" stroke-width="1" stroke-dasharray="3,3"/>
<line x1="57" y1="153.5" x2="498" y2="153.5" stroke="#8A8A8A" stroke-width="1" stroke-dasharray="3,3"/>
<rect x="56.5" y="130.5" width="442" height="46" fill="none" stroke="#A0A0A0"/>
<line x1="49" y1="130.5" x2="56" y2="130.5" stroke="#A0A0A0"/>
<line x1="49" y1="153.5" x2="56" y2="153.5" stroke="#A0A0A0"/>
<line x1="49" y1="176.5" x2="56" y2="176.5" stroke="#A0A0A0"/>
<line x1="499" y1="130.5" x2="506" y2="130.5" stroke="#A0A0A0"/>
<line x1="499" y1="153.5" x2="506" y2="153.5" stroke="#A0A0A0"/>
<line x1="499" y1="176.5" x2="506" y2="176.5" stroke="#A0A0A0"/>
<line x1="100.5" y1="198" x2="100.5" y2="243" stroke="#8A8A8A" stroke-width="1" stroke-dasharray="3,3"/>
<line x1="144.5" y1="198" x2="144.5" y2="243" stroke="#8A8A8A" stroke-width="1" stroke-dasharray="3,3"/>
<line x1="189.5" y1="198" x2="189.5" y2="243" stroke="#8A8A8A" stroke-width="1" stroke-dasharray="3,3"/>
<line x1="233.5" y1="198" x2="233.5" y2="243" stroke="#8A8A8A" stroke-width="1" stroke-dasharray="3,3"/>
<line x1="277.5" y1="198" x2="277.5" y2="243" stroke="#8A8A8A" stroke-width="1" stroke-dasharray="3,3"/>
<line x1="321.5" y1="198" x2="321.5" y2="243" stroke="#8A8A8A" stroke-width="1" stroke-dasharray="3,3"/>
<line x1="365.5" y1="198" x2="365.5" y2="243" stroke="#8A8A8A" stroke-width="1" stroke-dasharray="3,3"/>
<line x1="410.5" y1="198" x2="410.5" y2="243" stroke="#8A8A8A" stroke-width="1" stroke-dasharray="3,3"/>
<line x1="454.5" y1="198" x2="454.5" y2="243" stroke="#8A8A8A" stroke-width="1" stroke-dasharray="3,3"/>
<line x1="57" y1="219.5" x2="498" y2="219.5" stroke="#8A8A8A" stroke-width="1" stroke-dasharray="3,3"/>
<rect x="56.5" y="197.5" width="442" height="46" fill="none" stroke="#A0A0A0"/>
<line x1="49" y1="197.5" x2="56" y2="197.5" stroke="#A0A0A0"/>
<line x1="49" y1="219.5" x2="56" y2="219.5" stroke="#A0A0A0"/>
<line x1="49" y1="243.5" x2="56" y2="243.5" stroke="#A0A0A0"/>
<line x1="100.5" y1="265" x2="100.5" y2="310" stroke="#8A8A8A" stroke-width="1" stroke-dasharray="3,3"/>
<line x1="144.5" y1="265" x2="144.5" y2="310" stroke="#8A8A8A" stroke-width="1" stroke-dasharray="3,3"/>
<line x1="189.5" y1="265" x2="189.5" y2="310" stroke="#8A8A8A" stroke-width="1" stroke-dasharray="3,3"/>
<line x1="233.5" y1="265" x2="233.5" y2="310" stroke="#8A8A8A" stroke-width="1" stroke-dasharray="3,3"/>
<line x1="277.5" y1="265" x2="277.5" y2="310" stroke="#8A8A8A" stroke-width="1" stroke-dasharray="3,3"/>
<line x1="321.5" y1="265" x2="321.5" y2="310" stroke="#8A8A8A" stroke-width="1" stroke-dasharray="3,3"/>
<line x1="365.5" y1="265" x2="365.5" y2="310" stroke="#8A8A8A" stroke-width="1" stroke-dasharray="3,3"/>
<line x1="410.5" y1="265" x2="410.5" y2="310" stroke="#8A8A8A" stroke-width="1" stroke-dasharray="3,3"/>
<line x1="454.5" y1="265" x2="454.5" y2="310" stroke="#8A8A8A" stroke-width="1" stroke-dasharray="3,3"/>
<line x1="57" y1="287.5" x2="498" y2="287.5" stroke="#8A8A8A" stroke-width="1" stroke-dasharray="3,3"/>
<rect x="56.5" y="264.5" width="442" height="46" fill="none" stroke="#A0A0A0"/>
<line x1="49" y1="264.5" x2="56" y2="264.5" stroke="#A0A0A0"/>
<line x1="49" y1="287.5" x2="56" y2="287.5" stroke="#A0A0A0"/>
<line x1="49" y1="310.5" x2="56" y2="310.5" stroke="#A0A0A0"/>
<line x1="100.5" y1="332" x2="100.5" y2="378" stroke="#8A8A8A" stroke-width="1" stroke-dasharray="3,3"/>
<line x1="144.5" y1="332" x2="144.5" y2="378" stroke="#8A8A8A" stroke-width="1" stroke-dasharray="3,3"/>
<line x1="189.5" y1="332" x2="189.5" y2="378" stroke="#8A8A8A" stroke-width="1" stroke-dasharray="3,3"/>
<line x1="233.5" y1="332" x2="233.5" y2="378" stroke="#8A8A8A" stroke-width="1" stroke-dasharray="3,3"/>
<line x1="277.5" y1="332" x2="277.5" y2="378" stroke="#8A8A8A" stroke-width="1" stroke-dasharray="3,3"/>
<line x1="321.5" y1="332" x2="321.5" y2="378" stroke="#8A8A8A" stroke-width="1" stroke-dasharray="3,3"/>
<line x1="365.5" y1="332" x2="365.5" y2="378" stroke="#8A8A8A" stroke-width="1" stroke-dasharray="3,3"/>
<line x1="410.5" y1="332" x2="410.5" y2="378" stroke="#8A8A8A" stroke-width="1" stroke-dasharray="3,3"/>
<line x1="454.5" y1="332" x2="454.5" y2="378" stroke="#8A8A8A" stroke-width="1" stroke-dasharray="3,3"/>
<line x1="57" y1="354.5" x2="498" y2="354.5" stroke="#8A8A8A" stroke-width="1" stroke-dasharray="3,3"/>
<rect x="56.5" y="331.5" width="442" height="47" fill="none" stroke="#A0A0A0"/>
<line x1="49" y1="331.5" x2="56" y2="331.5" stroke="#A0A0A0"/>
<line x1="49" y1="354.5" x2="56" y2="354.5" stroke="#A0A0A0"/>
<line x1="49" y1="378.5" x2="56" y2="378.5" stroke="#A0A0A0"/>
<line x1="100.5" y1="400" x2="100.5" y2="449" stroke="#8A8A8A" stroke-width="1" stroke-dasharray="3,3"/>
<line x1="144.5" y1="400" x2="144.5" y2="449" stroke="#8A8A8A" stroke-width="1" stroke-dasharray="3,3"/>
<line x1="189.5" y1="400" x2="189.5" y2="449" stroke="#8A8A8A" stroke-width="1" stroke-dasharray="3,3"/>
<line x1="233.5" y1="400" x2="233.5" y2="449" stroke="#8A8A8A" stroke-width="1" stroke-dasharray="3,3"/>
<line x1="277.5" y1="400" x2="277.5" y2="449" stroke="#8A8A8A" stroke-width="1" stroke-dasharray="3,3"/>
<line x1="321.5" y1="400" x2="321.5" y2="449" stroke="#8A8A8A" stroke-width="1" stroke-dasharray="3,3"/>
<line x1="365.5" y1="400" x2="365.5" y2="449" stroke="#8A8A8A" stroke-width="1" stroke-dasharray="3,3"/>
<line x1="410.5" y1="400" x2="410.5" y2="449" stroke="#8A8A8A" stroke-width="1" stroke-dasharray="3,3"/>
<line x1="454.5" y1="400" x2="454.5" y2="449" stroke="#8A8A8A" stroke-width="1" stroke-dasharray="3,3"/>
<line x1="57" y1="423.5" x2="498" y2="423.5" stroke="#8A8A8A" stroke-width="1" stroke-dasharray="3,3"/>
<rect x="56.5" y="399.5" width="442" height="50" fill="none" stroke="#A0A0A0"/>
<line x1="49" y1="399.5" x2="56" y2="399.5" stroke="#A0A0A0"/>
<line x1="49" y1="423.5" x2="56" y2="423.5" stroke="#A0A0A0"/>
<line x1="49" y1="449.5" x2="56" y2="449.5" stroke="#A0A0A0"/>
<line x1="56.5" y1="450" x2="56.5" y2="457" stroke="#A0A0A0"/>
<line x1="100.5" y1="450" x2="100.5" y2="457" stroke="#A0A0A0"/>
<line x1="144.5" y1="450" x2="144.5" y2="457" stroke="#A0A0A0"/>
<line x1="189.5" y1="450" x2="189.5" y2="457" stroke="#A0A0A0"/>
<line x1="233.5" y1="450" x2="233.5" y2="457" stroke="#A0A0A0"/>
<line x1="277.5" y1="450" x2="277.5" y2="457" stroke="#A0A0A0"/>
<line x1="321.5" y1="450" x2="321.5" y2="457" stroke="#A0A0A0"/>
<line x1="365.5" y1="450" x2="365.5" y2="457" stroke="#A0A0A0"/>
<line x1="410.5" y1="450" x2="410.5" y2="457" stroke="#A0A0A0"/>
<line x1="454.5" y1="450" x2="454.5" y2="457" stroke="#A0A0A0"/>
<line x1="498.5" y1="450" x2="498.5" y2="457" stroke="#A0A0A0"/>
</g>
<text x="47.8" y="135" font-family="Liberation Sans" font-size="13" font-weight="normal" fill="#A0A0A0" text-anchor="end" textLength="27" lengthAdjust="spacingAndGlyphs" >3.0V</text>
<text x="47.8" y="158" font-family="Liberation Sans" font-size="13" font-weight="normal" fill="#A0A0A0" text-anchor="end" textLength="27" lengthAdjust="spacingAndGlyphs" >1.5V</text>
<text x="47.8" y="181" font-family="Liberation Sans" font-size="13" font-weight="normal" fill="#A0A0A0" text-anchor="end" textLength="27" lengthAdjust="spacingAndGlyphs" >0.0V</text>
<text x="508.3" y="135" font-family="Liberation Sans" font-size="13" font-weight="normal" fill="#A0A0A0" text-anchor="start" textLength="27.7" lengthAdjust="spacingAndGlyphs" >2.0A</text>
<text x="508.3" y="158" font-family="Liberation Sans" font-size="13" font-weight="normal" fill="#A0A0A0" text-anchor="start" textLength="27.7" lengthAdjust="spacingAndGlyphs" >1.0A</text>
<text x="508.3" y="181" font-family="Liberation Sans" font-size="13" font-weight="normal" fill="#A0A0A0" text-anchor="start" textLength="27.7" lengthAdjust="spacingAndGlyphs" >0.0A</text>
<text x="47.8" y="202" font-family="Liberation Sans" font-size="13" font-weight="normal" fill="#A0A0A0" text-anchor="end" textLength="27" lengthAdjust="spacingAndGlyphs" >3.0V</text>
<text x="47.8" y="224" font-family="Liberation Sans" font-size="13" font-weight="normal" fill="#A0A0A0" text-anchor="end" textLength="27" lengthAdjust="spacingAndGlyphs" >1.4V</text>
<text x="47.8" y="248" font-family="Liberation Sans" font-size="13" font-weight="normal" fill="#A0A0A0" text-anchor="end" textLength="32" lengthAdjust="spacingAndGlyphs" >-0.3V</text>
<text x="47.8" y="269" font-family="Liberation Sans" font-size="13" font-weight="normal" fill="#A0A0A0" text-anchor="end" textLength="35.5" lengthAdjust="spacingAndGlyphs" >60mV</text>
<text x="47.8" y="292" font-family="Liberation Sans" font-size="13" font-weight="normal" fill="#A0A0A0" text-anchor="end" textLength="35.5" lengthAdjust="spacingAndGlyphs" >30mV</text>
<text x="47.8" y="315" font-family="Liberation Sans" font-size="13" font-weight="normal" fill="#A0A0A0" text-anchor="end" textLength="26.5" lengthAdjust="spacingAndGlyphs" >0mV</text>
<text x="47.8" y="336" font-family="Liberation Sans" font-size="13" font-weight="normal" fill="#A0A0A0" text-anchor="end" textLength="27" lengthAdjust="spacingAndGlyphs" >3.0V</text>
<text x="47.8" y="359" font-family="Liberation Sans" font-size="13" font-weight="normal" fill="#A0A0A0" text-anchor="end" textLength="27" lengthAdjust="spacingAndGlyphs" >1.5V</text>
<text x="47.8" y="383" font-family="Liberation Sans" font-size="13" font-weight="normal" fill="#A0A0A0" text-anchor="end" textLength="27" lengthAdjust="spacingAndGlyphs" >0.0V</text>
<text x="47.8" y="404" font-family="Liberation Sans" font-size="13" font-weight="normal" fill="#A0A0A0" text-anchor="end" textLength="27" lengthAdjust="spacingAndGlyphs" >3.0V</text>
<text x="47.8" y="428" font-family="Liberation Sans" font-size="13" font-weight="normal" fill="#A0A0A0" text-anchor="end" textLength="27" lengthAdjust="spacingAndGlyphs" >1.4V</text>
<text x="47.8" y="454" font-family="Liberation Sans" font-size="13" font-weight="normal" fill="#A0A0A0" text-anchor="end" textLength="32" lengthAdjust="spacingAndGlyphs" >-0.3V</text>
<text x="56.5" y="469.6" font-family="Liberation Sans" font-size="13" font-weight="normal" fill="#A0A0A0" text-anchor="middle" textLength="14" lengthAdjust="spacingAndGlyphs" >0s</text>
<text x="100.7" y="469.6" font-family="Liberation Sans" font-size="13" font-weight="normal" fill="#A0A0A0" text-anchor="middle" textLength="22.5" lengthAdjust="spacingAndGlyphs" >10s</text>
<text x="144.9" y="469.6" font-family="Liberation Sans" font-size="13" font-weight="normal" fill="#A0A0A0" text-anchor="middle" textLength="22.5" lengthAdjust="spacingAndGlyphs" >20s</text>
<text x="189.1" y="469.6" font-family="Liberation Sans" font-size="13" font-weight="normal" fill="#A0A0A0" text-anchor="middle" textLength="22.5" lengthAdjust="spacingAndGlyphs" >30s</text>
<text x="233.3" y="469.6" font-family="Liberation Sans" font-size="13" font-weight="normal" fill="#A0A0A0" text-anchor="middle" textLength="22.5" lengthAdjust="spacingAndGlyphs" >40s</text>
<text x="277.5" y="469.6" font-family="Liberation Sans" font-size="13" font-weight="normal" fill="#A0A0A0" text-anchor="middle" textLength="22.5" lengthAdjust="spacingAndGlyphs" >50s</text>
<text x="321.7" y="469.6" font-family="Liberation Sans" font-size="13" font-weight="normal" fill="#A0A0A0" text-anchor="middle" textLength="22.5" lengthAdjust="spacingAndGlyphs" >60s</text>
<text x="365.9" y="469.6" font-family="Liberation Sans" font-size="13" font-weight="normal" fill="#A0A0A0" text-anchor="middle" textLength="22.5" lengthAdjust="spacingAndGlyphs" >70s</text>
<text x="410.1" y="469.6" font-family="Liberation Sans" font-size="13" font-weight="normal" fill="#A0A0A0" text-anchor="middle" textLength="22.5" lengthAdjust="spacingAndGlyphs" >80s</text>
<text x="454.3" y="469.6" font-family="Liberation Sans" font-size="13" font-weight="normal" fill="#A0A0A0" text-anchor="middle" textLength="22.5" lengthAdjust="spacingAndGlyphs" >90s</text>
<text x="498.5" y="469.6" font-family="Liberation Sans" font-size="13" font-weight="normal" fill="#A0A0A0" text-anchor="middle" textLength="31" lengthAdjust="spacingAndGlyphs" >100s</text>
<text x="109.1" y="125" font-family="Liberation Sans" font-size="13.5" font-weight="bold" fill="#00E4E4" text-anchor="start" textLength="39.4" lengthAdjust="spacingAndGlyphs" >V(vdd)</text>
<text x="257.9" y="125" font-family="Liberation Sans" font-size="13.5" font-weight="bold" fill="#8000FF" text-anchor="start" textLength="35.7" lengthAdjust="spacingAndGlyphs" >V(nb!)</text>
<text x="406.9" y="125" font-family="Liberation Sans" font-size="13.5" font-weight="bold" fill="#00E400" text-anchor="start" textLength="31.6" lengthAdjust="spacingAndGlyphs" >-I(V1)</text>
<text x="148.5" y="192" font-family="Liberation Sans" font-size="13.5" font-weight="bold" fill="#FF00FF" text-anchor="start" textLength="33.8" lengthAdjust="spacingAndGlyphs" >V(ct0)</text>
<text x="369.4" y="192" font-family="Liberation Sans" font-size="13.5" font-weight="bold" fill="#00FF80" text-anchor="start" textLength="34" lengthAdjust="spacingAndGlyphs" >V(ct1)</text>
<text x="257" y="259" font-family="Liberation Sans" font-size="13.5" font-weight="bold" fill="#FFFF00" text-anchor="start" textLength="39.2" lengthAdjust="spacingAndGlyphs" >V(vp1)</text>
<text x="257" y="326" font-family="Liberation Sans" font-size="13.5" font-weight="bold" fill="#FF0000" text-anchor="start" textLength="39.2" lengthAdjust="spacingAndGlyphs" >V(vp0)</text>
<text x="257.5" y="393.5" font-family="Liberation Sans" font-size="13.5" font-weight="bold" fill="#0000FF" text-anchor="start" textLength="38.5" lengthAdjust="spacingAndGlyphs" >V(test)</text>
<g fill="#8000FF" shape-rendering="crispEdges"><rect x="57" y="132" width="1" height="1"/><rect x="58" y="132" width="1" height="4"/><rect x="58" y="136" width="2" height="12"/><rect x="60" y="131" width="1" height="8"/><rect x="60" y="137" width="1" height="4"/><rect x="61" y="140" width="1" height="4"/><rect x="62" y="143" width="1" height="4"/><rect x="63" y="132" width="1" height="14"/><rect x="63" y="132" width="4" height="1"/><rect x="67" y="132" width="1" height="4"/><rect x="67" y="136" width="2" height="12"/><rect x="69" y="131" width="1" height="8"/><rect x="69" y="137" width="1" height="4"/><rect x="70" y="140" width="1" height="4"/><rect x="71" y="143" width="1" height="4"/><rect x="72" y="132" width="1" height="14"/><rect x="72" y="132" width="4" height="1"/><rect x="76" y="132" width="1" height="4"/><rect x="76" y="136" width="2" height="12"/><rect x="78" y="131" width="1" height="8"/><rect x="78" y="137" width="1" height="4"/><rect x="79" y="140" width="1" height="4"/><rect x="80" y="143" width="1" height="4"/><rect x="81" y="132" width="1" height="14"/><rect x="81" y="132" width="4" height="1"/><rect x="85" y="132" width="1" height="4"/><rect x="85" y="136" width="2" height="12"/><rect x="87" y="131" width="1" height="8"/><rect x="87" y="137" width="1" height="4"/><rect x="88" y="140" width="1" height="4"/><rect x="89" y="143" width="1" height="4"/><rect x="90" y="132" width="1" height="14"/><rect x="90" y="132" width="4" height="1"/><rect x="94" y="132" width="1" height="4"/><rect x="94" y="136" width="2" height="12"/><rect x="96" y="131" width="1" height="8"/><rect x="96" y="137" width="1" height="4"/><rect x="97" y="140" width="1" height="4"/><rect x="98" y="143" width="1" height="4"/><rect x="99" y="132" width="1" height="14"/><rect x="99" y="132" width="4" height="1"/><rect x="103" y="132" width="1" height="4"/><rect x="103" y="136" width="2" height="12"/><rect x="105" y="131" width="1" height="8"/><rect x="105" y="137" width="1" height="4"/><rect x="106" y="140" width="1" height="4"/><rect x="107" y="143" width="1" height="4"/><rect x="108" y="132" width="1" height="14"/><rect x="108" y="132" width="4" height="1"/><rect x="112" y="132" width="1" height="4"/><rect x="112" y="136" width="2" height="12"/><rect x="114" y="131" width="1" height="8"/><rect x="114" y="137" width="1" height="4"/><rect x="115" y="140" width="1" height="4"/><rect x="116" y="143" width="1" height="4"/><rect x="117" y="132" width="1" height="14"/><rect x="117" y="132" width="4" height="1"/><rect x="121" y="132" width="1" height="4"/><rect x="121" y="136" width="2" height="12"/><rect x="123" y="131" width="1" height="8"/><rect x="123" y="137" width="1" height="4"/><rect x="124" y="140" width="1" height="4"/><rect x="125" y="143" width="1" height="4"/><rect x="126" y="132" width="1" height="14"/><rect x="126" y="132" width="4" height="1"/><rect x="130" y="132" width="1" height="4"/><rect x="130" y="136" width="2" height="12"/><rect x="132" y="131" width="1" height="8"/><rect x="132" y="137" width="1" height="4"/><rect x="133" y="140" width="1" height="4"/><rect x="134" y="143" width="1" height="4"/><rect x="135" y="132" width="1" height="14"/><rect x="135" y="132" width="4" height="1"/><rect x="139" y="132" width="1" height="4"/><rect x="139" y="136" width="2" height="12"/><rect x="141" y="131" width="1" height="8"/><rect x="141" y="137" width="1" height="4"/><rect x="142" y="140" width="1" height="4"/><rect x="143" y="143" width="1" height="4"/><rect x="144" y="132" width="1" height="14"/><rect x="144" y="132" width="4" height="1"/><rect x="148" y="132" width="1" height="4"/><rect x="148" y="136" width="2" height="12"/><rect x="150" y="131" width="1" height="8"/><rect x="150" y="137" width="1" height="4"/><rect x="151" y="140" width="1" height="4"/><rect x="152" y="143" width="1" height="4"/><rect x="153" y="132" width="1" height="14"/><rect x="153" y="132" width="4" height="1"/><rect x="157" y="132" width="1" height="4"/><rect x="157" y="136" width="2" height="12"/><rect x="159" y="131" width="1" height="8"/><rect x="159" y="137" width="1" height="4"/><rect x="160" y="140" width="1" height="4"/><rect x="161" y="143" width="1" height="4"/><rect x="162" y="132" width="1" height="14"/><rect x="162" y="132" width="5" height="1"/><rect x="167" y="132" width="1" height="4"/><rect x="167" y="136" width="2" height="12"/><rect x="169" y="131" width="1" height="8"/><rect x="169" y="137" width="1" height="4"/><rect x="170" y="140" width="1" height="4"/><rect x="171" y="143" width="1" height="4"/><rect x="172" y="132" width="1" height="14"/><rect x="172" y="132" width="4" height="1"/><rect x="176" y="132" width="1" height="4"/><rect x="176" y="136" width="2" height="12"/><rect x="178" y="131" width="1" height="8"/><rect x="178" y="137" width="1" height="4"/><rect x="179" y="140" width="1" height="4"/><rect x="180" y="143" width="1" height="4"/><rect x="181" y="132" width="1" height="14"/><rect x="181" y="132" width="4" height="1"/><rect x="185" y="132" width="1" height="4"/><rect x="185" y="136" width="2" height="12"/><rect x="187" y="131" width="1" height="8"/><rect x="187" y="137" width="1" height="4"/><rect x="188" y="140" width="1" height="4"/><rect x="189" y="143" width="1" height="4"/><rect x="190" y="132" width="1" height="14"/><rect x="190" y="132" width="4" height="1"/><rect x="194" y="132" width="1" height="4"/><rect x="194" y="136" width="2" height="12"/><rect x="196" y="131" width="1" height="8"/><rect x="196" y="137" width="1" height="4"/><rect x="197" y="140" width="1" height="4"/><rect x="198" y="143" width="1" height="4"/><rect x="199" y="132" width="1" height="14"/><rect x="199" y="132" width="4" height="1"/><rect x="203" y="132" width="1" height="4"/><rect x="203" y="136" width="2" height="12"/><rect x="205" y="131" width="1" height="8"/><rect x="205" y="137" width="1" height="4"/><rect x="206" y="140" width="1" height="4"/><rect x="207" y="143" width="1" height="4"/><rect x="208" y="132" width="1" height="14"/><rect x="208" y="132" width="4" height="1"/><rect x="212" y="132" width="1" height="4"/><rect x="212" y="136" width="2" height="12"/><rect x="214" y="131" width="1" height="8"/><rect x="214" y="137" width="1" height="4"/><rect x="215" y="140" width="1" height="4"/><rect x="216" y="143" width="1" height="4"/><rect x="217" y="132" width="1" height="14"/><rect x="217" y="132" width="4" height="1"/><rect x="221" y="132" width="1" height="4"/><rect x="221" y="136" width="2" height="12"/><rect x="223" y="131" width="1" height="8"/><rect x="223" y="137" width="1" height="4"/><rect x="224" y="140" width="1" height="4"/><rect x="225" y="143" width="1" height="4"/><rect x="226" y="132" width="1" height="14"/><rect x="226" y="132" width="4" height="1"/><rect x="230" y="132" width="1" height="4"/><rect x="230" y="136" width="2" height="12"/><rect x="232" y="131" width="1" height="8"/><rect x="232" y="137" width="1" height="4"/><rect x="233" y="140" width="1" height="4"/><rect x="234" y="143" width="1" height="4"/><rect x="235" y="132" width="1" height="14"/><rect x="235" y="132" width="4" height="1"/><rect x="239" y="132" width="1" height="4"/><rect x="239" y="136" width="2" height="12"/><rect x="241" y="131" width="1" height="8"/><rect x="241" y="137" width="1" height="4"/><rect x="242" y="140" width="1" height="4"/><rect x="243" y="143" width="1" height="4"/><rect x="244" y="132" width="1" height="14"/><rect x="244" y="132" width="4" height="1"/><rect x="248" y="132" width="1" height="4"/><rect x="248" y="136" width="2" height="12"/><rect x="250" y="131" width="1" height="8"/><rect x="250" y="137" width="1" height="4"/><rect x="251" y="140" width="1" height="4"/><rect x="252" y="143" width="1" height="4"/><rect x="253" y="132" width="1" height="14"/><rect x="253" y="132" width="4" height="1"/><rect x="257" y="132" width="1" height="4"/><rect x="257" y="136" width="2" height="12"/><rect x="259" y="131" width="1" height="8"/><rect x="259" y="137" width="1" height="4"/><rect x="260" y="140" width="1" height="4"/><rect x="261" y="143" width="1" height="4"/><rect x="262" y="132" width="1" height="14"/><rect x="262" y="132" width="4" height="1"/><rect x="266" y="132" width="1" height="4"/><rect x="266" y="136" width="2" height="12"/><rect x="268" y="131" width="1" height="8"/><rect x="268" y="137" width="1" height="4"/><rect x="269" y="140" width="1" height="4"/><rect x="270" y="143" width="1" height="4"/><rect x="271" y="132" width="1" height="14"/><rect x="271" y="132" width="4" height="1"/><rect x="275" y="132" width="1" height="4"/><rect x="275" y="136" width="2" height="12"/><rect x="277" y="131" width="1" height="8"/><rect x="277" y="137" width="1" height="4"/><rect x="278" y="140" width="1" height="4"/><rect x="279" y="143" width="1" height="4"/><rect x="280" y="132" width="1" height="14"/><rect x="280" y="132" width="4" height="1"/><rect x="284" y="132" width="1" height="4"/><rect x="284" y="136" width="2" height="12"/><rect x="286" y="131" width="1" height="8"/><rect x="286" y="137" width="1" height="4"/><rect x="287" y="140" width="1" height="4"/><rect x="288" y="143" width="1" height="4"/><rect x="289" y="132" width="1" height="14"/><rect x="289" y="132" width="4" height="1"/><rect x="293" y="132" width="1" height="4"/><rect x="293" y="136" width="2" height="12"/><rect x="295" y="131" width="1" height="8"/><rect x="295" y="137" width="1" height="4"/><rect x="296" y="140" width="1" height="4"/><rect x="297" y="143" width="1" height="4"/><rect x="298" y="132" width="1" height="14"/><rect x="298" y="132" width="4" height="1"/><rect x="302" y="132" width="1" height="4"/><rect x="302" y="136" width="2" height="12"/><rect x="304" y="131" width="1" height="8"/><rect x="304" y="137" width="1" height="4"/><rect x="305" y="140" width="1" height="4"/><rect x="306" y="143" width="1" height="4"/><rect x="307" y="132" width="1" height="14"/><rect x="307" y="132" width="4" height="1"/><rect x="311" y="132" width="1" height="4"/><rect x="311" y="136" width="2" height="12"/><rect x="313" y="131" width="1" height="8"/><rect x="313" y="137" width="1" height="4"/><rect x="314" y="140" width="1" height="4"/><rect x="315" y="143" width="1" height="4"/><rect x="316" y="132" width="1" height="14"/><rect x="316" y="132" width="4" height="1"/><rect x="320" y="132" width="1" height="4"/><rect x="320" y="136" width="2" height="12"/><rect x="322" y="131" width="1" height="8"/><rect x="322" y="137" width="1" height="4"/><rect x="323" y="140" width="1" height="4"/><rect x="324" y="143" width="1" height="4"/><rect x="325" y="132" width="1" height="14"/><rect x="325" y="132" width="4" height="1"/><rect x="329" y="132" width="1" height="4"/><rect x="329" y="136" width="2" height="12"/><rect x="331" y="131" width="1" height="8"/><rect x="331" y="137" width="1" height="4"/><rect x="332" y="140" width="1" height="4"/><rect x="333" y="143" width="1" height="4"/><rect x="334" y="132" width="1" height="14"/><rect x="334" y="132" width="4" height="1"/><rect x="338" y="132" width="1" height="4"/><rect x="338" y="136" width="2" height="12"/><rect x="340" y="131" width="1" height="8"/><rect x="340" y="137" width="1" height="4"/><rect x="341" y="140" width="1" height="4"/><rect x="342" y="143" width="1" height="4"/><rect x="343" y="132" width="1" height="14"/><rect x="343" y="132" width="4" height="1"/><rect x="347" y="132" width="1" height="4"/><rect x="347" y="136" width="2" height="12"/><rect x="349" y="131" width="1" height="8"/><rect x="349" y="137" width="1" height="4"/><rect x="350" y="140" width="1" height="4"/><rect x="351" y="143" width="1" height="4"/><rect x="352" y="132" width="1" height="14"/><rect x="352" y="132" width="4" height="1"/><rect x="356" y="132" width="1" height="4"/><rect x="356" y="136" width="2" height="12"/><rect x="358" y="131" width="1" height="8"/><rect x="358" y="137" width="1" height="4"/><rect x="359" y="140" width="1" height="4"/><rect x="360" y="143" width="1" height="4"/><rect x="361" y="132" width="1" height="14"/><rect x="361" y="132" width="4" height="1"/><rect x="365" y="132" width="1" height="4"/><rect x="365" y="136" width="2" height="12"/><rect x="367" y="131" width="1" height="8"/><rect x="367" y="137" width="1" height="4"/><rect x="368" y="140" width="1" height="4"/><rect x="369" y="143" width="1" height="4"/><rect x="370" y="132" width="1" height="14"/><rect x="370" y="132" width="4" height="1"/><rect x="374" y="132" width="1" height="4"/><rect x="374" y="136" width="2" height="12"/><rect x="376" y="131" width="1" height="8"/><rect x="376" y="137" width="1" height="4"/><rect x="377" y="140" width="1" height="4"/><rect x="378" y="143" width="1" height="4"/><rect x="379" y="132" width="1" height="14"/><rect x="379" y="132" width="4" height="1"/><rect x="383" y="132" width="1" height="4"/><rect x="383" y="136" width="2" height="12"/><rect x="385" y="131" width="1" height="8"/><rect x="385" y="137" width="1" height="4"/><rect x="386" y="140" width="1" height="4"/><rect x="387" y="143" width="1" height="4"/><rect x="388" y="132" width="1" height="14"/><rect x="388" y="132" width="4" height="1"/><rect x="392" y="132" width="1" height="4"/><rect x="392" y="136" width="2" height="12"/><rect x="394" y="131" width="1" height="8"/><rect x="394" y="137" width="1" height="4"/><rect x="395" y="140" width="1" height="4"/><rect x="396" y="143" width="1" height="4"/><rect x="397" y="132" width="1" height="14"/><rect x="397" y="132" width="4" height="1"/><rect x="401" y="132" width="1" height="4"/><rect x="401" y="136" width="2" height="12"/><rect x="403" y="131" width="1" height="8"/><rect x="403" y="137" width="1" height="4"/><rect x="404" y="140" width="1" height="4"/><rect x="405" y="143" width="1" height="4"/><rect x="406" y="132" width="1" height="14"/><rect x="406" y="132" width="4" height="1"/><rect x="410" y="132" width="1" height="4"/><rect x="410" y="136" width="2" height="12"/><rect x="412" y="131" width="1" height="8"/><rect x="412" y="137" width="1" height="4"/><rect x="413" y="140" width="1" height="4"/><rect x="414" y="143" width="1" height="4"/><rect x="415" y="132" width="1" height="14"/><rect x="415" y="132" width="5" height="1"/><rect x="420" y="132" width="1" height="4"/><rect x="420" y="136" width="2" height="12"/><rect x="422" y="131" width="1" height="8"/><rect x="422" y="137" width="1" height="4"/><rect x="423" y="140" width="1" height="4"/><rect x="424" y="143" width="1" height="4"/><rect x="425" y="132" width="1" height="14"/><rect x="425" y="132" width="4" height="1"/><rect x="429" y="132" width="1" height="4"/><rect x="429" y="136" width="2" height="12"/><rect x="431" y="131" width="1" height="8"/><rect x="431" y="137" width="1" height="4"/><rect x="432" y="140" width="1" height="4"/><rect x="433" y="143" width="1" height="4"/><rect x="434" y="132" width="1" height="14"/><rect x="434" y="132" width="4" height="1"/><rect x="438" y="132" width="1" height="4"/><rect x="438" y="136" width="2" height="12"/><rect x="440" y="131" width="1" height="8"/><rect x="440" y="137" width="1" height="4"/><rect x="441" y="140" width="1" height="4"/><rect x="442" y="143" width="1" height="4"/><rect x="443" y="132" width="1" height="14"/><rect x="443" y="132" width="4" height="1"/><rect x="447" y="132" width="1" height="4"/><rect x="447" y="136" width="2" height="12"/><rect x="449" y="131" width="1" height="8"/><rect x="449" y="137" width="1" height="4"/><rect x="450" y="140" width="1" height="4"/><rect x="451" y="143" width="1" height="4"/><rect x="452" y="132" width="1" height="14"/><rect x="452" y="132" width="4" height="1"/><rect x="456" y="132" width="1" height="4"/><rect x="456" y="136" width="2" height="12"/><rect x="458" y="131" width="1" height="8"/><rect x="458" y="137" width="1" height="4"/><rect x="459" y="140" width="1" height="4"/><rect x="460" y="143" width="1" height="4"/><rect x="461" y="132" width="1" height="14"/><rect x="461" y="132" width="4" height="1"/><rect x="465" y="132" width="1" height="4"/><rect x="465" y="136" width="2" height="12"/><rect x="467" y="131" width="1" height="8"/><rect x="467" y="137" width="1" height="4"/><rect x="468" y="140" width="1" height="4"/><rect x="469" y="143" width="1" height="4"/><rect x="470" y="132" width="1" height="14"/><rect x="470" y="132" width="4" height="1"/><rect x="474" y="132" width="1" height="4"/><rect x="474" y="136" width="2" height="12"/><rect x="476" y="131" width="1" height="8"/><rect x="476" y="137" width="1" height="4"/><rect x="477" y="140" width="1" height="4"/><rect x="478" y="143" width="1" height="4"/><rect x="479" y="132" width="1" height="14"/><rect x="479" y="132" width="4" height="1"/><rect x="483" y="132" width="1" height="4"/><rect x="483" y="136" width="2" height="12"/><rect x="485" y="131" width="1" height="8"/><rect x="485" y="137" width="1" height="4"/><rect x="486" y="140" width="1" height="4"/><rect x="487" y="143" width="1" height="4"/><rect x="488" y="132" width="1" height="14"/><rect x="488" y="132" width="4" height="1"/><rect x="492" y="132" width="1" height="4"/><rect x="492" y="136" width="2" height="12"/><rect x="494" y="131" width="1" height="8"/><rect x="494" y="137" width="1" height="4"/><rect x="495" y="140" width="1" height="4"/><rect x="496" y="143" width="1" height="4"/><rect x="497" y="132" width="1" height="14"/><rect x="497" y="132" width="1" height="1"/></g>
<g fill="#FF00FF" shape-rendering="crispEdges"><rect x="57" y="199" width="1" height="1"/><rect x="58" y="199" width="1" height="4"/><rect x="58" y="203" width="2" height="11"/><rect x="60" y="198" width="1" height="7"/><rect x="60" y="203" width="1" height="4"/><rect x="61" y="206" width="1" height="4"/><rect x="62" y="209" width="1" height="5"/><rect x="63" y="199" width="1" height="14"/><rect x="63" y="199" width="4" height="1"/><rect x="67" y="199" width="1" height="4"/><rect x="67" y="203" width="2" height="11"/><rect x="69" y="198" width="1" height="7"/><rect x="69" y="203" width="1" height="4"/><rect x="70" y="206" width="1" height="4"/><rect x="71" y="209" width="1" height="5"/><rect x="72" y="199" width="1" height="14"/><rect x="72" y="199" width="4" height="1"/><rect x="76" y="199" width="1" height="4"/><rect x="76" y="203" width="2" height="11"/><rect x="78" y="198" width="1" height="7"/><rect x="78" y="203" width="1" height="4"/><rect x="79" y="206" width="1" height="4"/><rect x="80" y="209" width="1" height="5"/><rect x="81" y="199" width="1" height="14"/><rect x="81" y="199" width="4" height="1"/><rect x="85" y="199" width="1" height="4"/><rect x="85" y="203" width="2" height="11"/><rect x="87" y="198" width="1" height="7"/><rect x="87" y="203" width="1" height="4"/><rect x="88" y="206" width="1" height="4"/><rect x="89" y="209" width="1" height="5"/><rect x="90" y="199" width="1" height="14"/><rect x="90" y="199" width="4" height="1"/><rect x="94" y="199" width="1" height="4"/><rect x="94" y="203" width="2" height="11"/><rect x="96" y="198" width="1" height="7"/><rect x="96" y="203" width="1" height="4"/><rect x="97" y="206" width="1" height="4"/><rect x="98" y="209" width="1" height="5"/><rect x="99" y="199" width="1" height="14"/><rect x="99" y="199" width="4" height="1"/><rect x="103" y="199" width="1" height="4"/><rect x="103" y="203" width="2" height="11"/><rect x="105" y="198" width="1" height="7"/><rect x="105" y="203" width="1" height="4"/><rect x="106" y="206" width="1" height="4"/><rect x="107" y="209" width="1" height="5"/><rect x="108" y="199" width="1" height="14"/><rect x="108" y="199" width="4" height="1"/><rect x="112" y="199" width="1" height="4"/><rect x="112" y="203" width="2" height="11"/><rect x="114" y="198" width="1" height="7"/><rect x="114" y="203" width="1" height="4"/><rect x="115" y="206" width="1" height="4"/><rect x="116" y="209" width="1" height="5"/><rect x="117" y="199" width="1" height="14"/><rect x="117" y="199" width="4" height="1"/><rect x="121" y="199" width="1" height="4"/><rect x="121" y="203" width="2" height="11"/><rect x="123" y="198" width="1" height="7"/><rect x="123" y="203" width="1" height="4"/><rect x="124" y="206" width="1" height="4"/><rect x="125" y="209" width="1" height="5"/><rect x="126" y="199" width="1" height="14"/><rect x="126" y="199" width="4" height="1"/><rect x="130" y="199" width="1" height="4"/><rect x="130" y="203" width="2" height="11"/><rect x="132" y="198" width="1" height="7"/><rect x="132" y="203" width="1" height="4"/><rect x="133" y="206" width="1" height="4"/><rect x="134" y="209" width="1" height="5"/><rect x="135" y="199" width="1" height="14"/><rect x="135" y="199" width="4" height="1"/><rect x="139" y="199" width="1" height="4"/><rect x="139" y="203" width="2" height="11"/><rect x="141" y="198" width="1" height="7"/><rect x="141" y="203" width="1" height="4"/><rect x="142" y="206" width="1" height="4"/><rect x="143" y="209" width="1" height="5"/><rect x="144" y="199" width="1" height="14"/><rect x="144" y="199" width="4" height="1"/><rect x="148" y="199" width="1" height="4"/><rect x="148" y="203" width="2" height="11"/><rect x="150" y="198" width="1" height="7"/><rect x="150" y="203" width="1" height="4"/><rect x="151" y="206" width="1" height="4"/><rect x="152" y="209" width="1" height="5"/><rect x="153" y="199" width="1" height="14"/><rect x="153" y="199" width="4" height="1"/><rect x="157" y="199" width="1" height="4"/><rect x="157" y="203" width="2" height="11"/><rect x="159" y="198" width="1" height="7"/><rect x="159" y="203" width="1" height="4"/><rect x="160" y="206" width="1" height="4"/><rect x="161" y="209" width="1" height="5"/><rect x="162" y="199" width="1" height="14"/><rect x="162" y="199" width="5" height="1"/><rect x="167" y="199" width="1" height="4"/><rect x="167" y="203" width="2" height="11"/><rect x="169" y="198" width="1" height="7"/><rect x="169" y="203" width="1" height="4"/><rect x="170" y="206" width="1" height="4"/><rect x="171" y="209" width="1" height="5"/><rect x="172" y="199" width="1" height="14"/><rect x="172" y="199" width="4" height="1"/><rect x="176" y="199" width="1" height="4"/><rect x="176" y="203" width="2" height="11"/><rect x="178" y="198" width="1" height="7"/><rect x="178" y="203" width="1" height="4"/><rect x="179" y="206" width="1" height="4"/><rect x="180" y="209" width="1" height="5"/><rect x="181" y="199" width="1" height="14"/><rect x="181" y="199" width="4" height="1"/><rect x="185" y="199" width="1" height="4"/><rect x="185" y="203" width="2" height="11"/><rect x="187" y="198" width="1" height="7"/><rect x="187" y="203" width="1" height="4"/><rect x="188" y="206" width="1" height="4"/><rect x="189" y="209" width="1" height="5"/><rect x="190" y="199" width="1" height="14"/><rect x="190" y="199" width="4" height="1"/><rect x="194" y="199" width="1" height="4"/><rect x="194" y="203" width="2" height="11"/><rect x="196" y="198" width="1" height="7"/><rect x="196" y="203" width="1" height="4"/><rect x="197" y="206" width="1" height="4"/><rect x="198" y="209" width="1" height="5"/><rect x="199" y="199" width="1" height="14"/><rect x="199" y="199" width="4" height="1"/><rect x="203" y="199" width="1" height="4"/><rect x="203" y="203" width="2" height="11"/><rect x="205" y="198" width="1" height="7"/><rect x="205" y="203" width="1" height="4"/><rect x="206" y="206" width="1" height="4"/><rect x="207" y="209" width="1" height="5"/><rect x="208" y="199" width="1" height="14"/><rect x="208" y="199" width="4" height="1"/><rect x="212" y="199" width="1" height="4"/><rect x="212" y="203" width="2" height="11"/><rect x="214" y="198" width="1" height="7"/><rect x="214" y="203" width="1" height="4"/><rect x="215" y="206" width="1" height="4"/><rect x="216" y="209" width="1" height="5"/><rect x="217" y="199" width="1" height="14"/><rect x="217" y="199" width="4" height="1"/><rect x="221" y="199" width="1" height="4"/><rect x="221" y="203" width="2" height="11"/><rect x="223" y="198" width="1" height="7"/><rect x="223" y="203" width="1" height="4"/><rect x="224" y="206" width="1" height="4"/><rect x="225" y="209" width="1" height="5"/><rect x="226" y="199" width="1" height="14"/><rect x="226" y="199" width="4" height="1"/><rect x="230" y="199" width="1" height="4"/><rect x="230" y="203" width="2" height="11"/><rect x="232" y="198" width="1" height="7"/><rect x="232" y="203" width="1" height="4"/><rect x="233" y="206" width="1" height="4"/><rect x="234" y="209" width="1" height="5"/><rect x="235" y="199" width="1" height="14"/><rect x="235" y="199" width="4" height="1"/><rect x="239" y="199" width="1" height="4"/><rect x="239" y="203" width="2" height="11"/><rect x="241" y="198" width="1" height="7"/><rect x="241" y="203" width="1" height="4"/><rect x="242" y="206" width="1" height="4"/><rect x="243" y="209" width="1" height="5"/><rect x="244" y="199" width="1" height="14"/><rect x="244" y="199" width="4" height="1"/><rect x="248" y="199" width="1" height="4"/><rect x="248" y="203" width="2" height="11"/><rect x="250" y="198" width="1" height="7"/><rect x="250" y="203" width="1" height="4"/><rect x="251" y="206" width="1" height="4"/><rect x="252" y="209" width="1" height="5"/><rect x="253" y="199" width="1" height="14"/><rect x="253" y="199" width="4" height="1"/><rect x="257" y="199" width="1" height="4"/><rect x="257" y="203" width="2" height="11"/><rect x="259" y="198" width="1" height="7"/><rect x="259" y="203" width="1" height="4"/><rect x="260" y="206" width="1" height="4"/><rect x="261" y="209" width="1" height="5"/><rect x="262" y="199" width="1" height="14"/><rect x="262" y="199" width="4" height="1"/><rect x="266" y="199" width="1" height="4"/><rect x="266" y="203" width="2" height="11"/><rect x="268" y="198" width="1" height="7"/><rect x="268" y="203" width="1" height="4"/><rect x="269" y="206" width="1" height="4"/><rect x="270" y="209" width="1" height="5"/><rect x="271" y="199" width="1" height="14"/><rect x="271" y="199" width="4" height="1"/><rect x="275" y="199" width="1" height="4"/><rect x="275" y="203" width="2" height="11"/><rect x="277" y="198" width="1" height="7"/><rect x="277" y="203" width="1" height="4"/><rect x="278" y="206" width="1" height="4"/><rect x="279" y="209" width="1" height="5"/><rect x="280" y="199" width="1" height="14"/><rect x="280" y="199" width="4" height="1"/><rect x="284" y="199" width="1" height="4"/><rect x="284" y="203" width="2" height="11"/><rect x="286" y="198" width="1" height="7"/><rect x="286" y="203" width="1" height="4"/><rect x="287" y="206" width="1" height="4"/><rect x="288" y="209" width="1" height="5"/><rect x="289" y="199" width="1" height="14"/><rect x="289" y="199" width="4" height="1"/><rect x="293" y="199" width="1" height="4"/><rect x="293" y="203" width="2" height="11"/><rect x="295" y="198" width="1" height="7"/><rect x="295" y="203" width="1" height="4"/><rect x="296" y="206" width="1" height="4"/><rect x="297" y="209" width="1" height="5"/><rect x="298" y="199" width="1" height="14"/><rect x="298" y="199" width="4" height="1"/><rect x="302" y="199" width="1" height="4"/><rect x="302" y="203" width="2" height="11"/><rect x="304" y="198" width="1" height="7"/><rect x="304" y="203" width="1" height="4"/><rect x="305" y="206" width="1" height="4"/><rect x="306" y="209" width="1" height="5"/><rect x="307" y="199" width="1" height="14"/><rect x="307" y="199" width="4" height="1"/><rect x="311" y="199" width="1" height="4"/><rect x="311" y="203" width="2" height="11"/><rect x="313" y="198" width="1" height="7"/><rect x="313" y="203" width="1" height="4"/><rect x="314" y="206" width="1" height="4"/><rect x="315" y="209" width="1" height="5"/><rect x="316" y="199" width="1" height="14"/><rect x="316" y="199" width="4" height="1"/><rect x="320" y="199" width="1" height="4"/><rect x="320" y="203" width="2" height="11"/><rect x="322" y="198" width="1" height="7"/><rect x="322" y="203" width="1" height="4"/><rect x="323" y="206" width="1" height="4"/><rect x="324" y="209" width="1" height="5"/><rect x="325" y="199" width="1" height="14"/><rect x="325" y="199" width="4" height="1"/><rect x="329" y="199" width="1" height="4"/><rect x="329" y="203" width="2" height="11"/><rect x="331" y="198" width="1" height="7"/><rect x="331" y="203" width="1" height="4"/><rect x="332" y="206" width="1" height="4"/><rect x="333" y="209" width="1" height="5"/><rect x="334" y="199" width="1" height="14"/><rect x="334" y="199" width="4" height="1"/><rect x="338" y="199" width="1" height="4"/><rect x="338" y="203" width="2" height="11"/><rect x="340" y="198" width="1" height="7"/><rect x="340" y="203" width="1" height="4"/><rect x="341" y="206" width="1" height="4"/><rect x="342" y="209" width="1" height="5"/><rect x="343" y="199" width="1" height="14"/><rect x="343" y="199" width="4" height="1"/><rect x="347" y="199" width="1" height="4"/><rect x="347" y="203" width="2" height="11"/><rect x="349" y="198" width="1" height="7"/><rect x="349" y="203" width="1" height="4"/><rect x="350" y="206" width="1" height="4"/><rect x="351" y="209" width="1" height="5"/><rect x="352" y="199" width="1" height="14"/><rect x="352" y="199" width="4" height="1"/><rect x="356" y="199" width="1" height="4"/><rect x="356" y="203" width="2" height="11"/><rect x="358" y="198" width="1" height="7"/><rect x="358" y="203" width="1" height="4"/><rect x="359" y="206" width="1" height="4"/><rect x="360" y="209" width="1" height="5"/><rect x="361" y="199" width="1" height="14"/><rect x="361" y="199" width="4" height="1"/><rect x="365" y="199" width="1" height="4"/><rect x="365" y="203" width="2" height="11"/><rect x="367" y="198" width="1" height="7"/><rect x="367" y="203" width="1" height="4"/><rect x="368" y="206" width="1" height="4"/><rect x="369" y="209" width="1" height="5"/><rect x="370" y="199" width="1" height="14"/><rect x="370" y="199" width="4" height="1"/><rect x="374" y="199" width="1" height="4"/><rect x="374" y="203" width="2" height="11"/><rect x="376" y="198" width="1" height="7"/><rect x="376" y="203" width="1" height="4"/><rect x="377" y="206" width="1" height="4"/><rect x="378" y="209" width="1" height="5"/><rect x="379" y="199" width="1" height="14"/><rect x="379" y="199" width="4" height="1"/><rect x="383" y="199" width="1" height="4"/><rect x="383" y="203" width="2" height="11"/><rect x="385" y="198" width="1" height="7"/><rect x="385" y="203" width="1" height="4"/><rect x="386" y="206" width="1" height="4"/><rect x="387" y="209" width="1" height="5"/><rect x="388" y="199" width="1" height="14"/><rect x="388" y="199" width="4" height="1"/><rect x="392" y="199" width="1" height="4"/><rect x="392" y="203" width="2" height="11"/><rect x="394" y="198" width="1" height="7"/><rect x="394" y="203" width="1" height="4"/><rect x="395" y="206" width="1" height="4"/><rect x="396" y="209" width="1" height="5"/><rect x="397" y="199" width="1" height="14"/><rect x="397" y="199" width="4" height="1"/><rect x="401" y="199" width="1" height="4"/><rect x="401" y="203" width="2" height="11"/><rect x="403" y="198" width="1" height="7"/><rect x="403" y="203" width="1" height="4"/><rect x="404" y="206" width="1" height="4"/><rect x="405" y="209" width="1" height="5"/><rect x="406" y="199" width="1" height="14"/><rect x="406" y="199" width="4" height="1"/><rect x="410" y="199" width="1" height="4"/><rect x="410" y="203" width="2" height="11"/><rect x="412" y="198" width="1" height="7"/><rect x="412" y="203" width="1" height="4"/><rect x="413" y="206" width="1" height="4"/><rect x="414" y="209" width="1" height="5"/><rect x="415" y="199" width="1" height="14"/><rect x="415" y="199" width="5" height="1"/><rect x="420" y="199" width="1" height="4"/><rect x="420" y="203" width="2" height="11"/><rect x="422" y="198" width="1" height="7"/><rect x="422" y="203" width="1" height="4"/><rect x="423" y="206" width="1" height="4"/><rect x="424" y="209" width="1" height="5"/><rect x="425" y="199" width="1" height="14"/><rect x="425" y="199" width="4" height="1"/><rect x="429" y="199" width="1" height="4"/><rect x="429" y="203" width="2" height="11"/><rect x="431" y="198" width="1" height="7"/><rect x="431" y="203" width="1" height="4"/><rect x="432" y="206" width="1" height="4"/><rect x="433" y="209" width="1" height="5"/><rect x="434" y="199" width="1" height="14"/><rect x="434" y="199" width="4" height="1"/><rect x="438" y="199" width="1" height="4"/><rect x="438" y="203" width="2" height="11"/><rect x="440" y="198" width="1" height="7"/><rect x="440" y="203" width="1" height="4"/><rect x="441" y="206" width="1" height="4"/><rect x="442" y="209" width="1" height="5"/><rect x="443" y="199" width="1" height="14"/><rect x="443" y="199" width="4" height="1"/><rect x="447" y="199" width="1" height="4"/><rect x="447" y="203" width="2" height="11"/><rect x="449" y="198" width="1" height="7"/><rect x="449" y="203" width="1" height="4"/><rect x="450" y="206" width="1" height="4"/><rect x="451" y="209" width="1" height="5"/><rect x="452" y="199" width="1" height="14"/><rect x="452" y="199" width="4" height="1"/><rect x="456" y="199" width="1" height="4"/><rect x="456" y="203" width="2" height="11"/><rect x="458" y="198" width="1" height="7"/><rect x="458" y="203" width="1" height="4"/><rect x="459" y="206" width="1" height="4"/><rect x="460" y="209" width="1" height="5"/><rect x="461" y="199" width="1" height="14"/><rect x="461" y="199" width="4" height="1"/><rect x="465" y="199" width="1" height="4"/><rect x="465" y="203" width="2" height="11"/><rect x="467" y="198" width="1" height="7"/><rect x="467" y="203" width="1" height="4"/><rect x="468" y="206" width="1" height="4"/><rect x="469" y="209" width="1" height="5"/><rect x="470" y="199" width="1" height="14"/><rect x="470" y="199" width="4" height="1"/><rect x="474" y="199" width="1" height="4"/><rect x="474" y="203" width="2" height="11"/><rect x="476" y="198" width="1" height="7"/><rect x="476" y="203" width="1" height="4"/><rect x="477" y="206" width="1" height="4"/><rect x="478" y="209" width="1" height="5"/><rect x="479" y="199" width="1" height="14"/><rect x="479" y="199" width="4" height="1"/><rect x="483" y="199" width="1" height="4"/><rect x="483" y="203" width="2" height="11"/><rect x="485" y="198" width="1" height="7"/><rect x="485" y="203" width="1" height="4"/><rect x="486" y="206" width="1" height="4"/><rect x="487" y="209" width="1" height="5"/><rect x="488" y="199" width="1" height="14"/><rect x="488" y="199" width="4" height="1"/><rect x="492" y="199" width="1" height="4"/><rect x="492" y="203" width="2" height="11"/><rect x="494" y="198" width="1" height="7"/><rect x="494" y="203" width="1" height="4"/><rect x="495" y="206" width="1" height="4"/><rect x="496" y="209" width="1" height="5"/><rect x="497" y="199" width="1" height="14"/><rect x="497" y="199" width="1" height="1"/></g>
<line x1="57" y1="239.5" x2="498" y2="239.5" stroke="#00F080" stroke-width="1.2" />
<line x1="57" y1="266.5" x2="498" y2="266.5" stroke="#FFFF00" stroke-width="1.2" />
<path d="M57 333.5 L58.49 333.5 L58.50 333.5 L58.50 348.5 L61.90 348.5 L62.10 347 L62.10 339 L62.90 337 L63.10 333.5 L67.53 333.5 L67.53 333.5 L67.53 348.5 L70.94 348.5 L71.13 347 L71.13 339 L71.94 337 L72.13 333.5 L76.57 333.5 L76.57 333.5 L76.57 348.5 L79.97 348.5 L80.17 347 L80.17 339 L80.97 337 L81.17 333.5 L85.60 333.5 L85.61 333.5 L85.61 348.5 L89.01 348.5 L89.20 347 L89.20 339 L90.01 337 L90.20 333.5 L94.64 333.5 L94.64 333.5 L94.64 348.5 L98.04 348.5 L98.24 347 L98.24 339 L99.04 337 L99.24 333.5 L103.67 333.5 L103.67 333.5 L103.67 348.5 L107.08 348.5 L107.27 347 L107.27 339 L108.08 337 L108.27 333.5 L112.71 333.5 L112.71 333.5 L112.71 348.5 L116.11 348.5 L116.31 347 L116.31 339 L117.11 337 L117.31 333.5 L121.75 333.5 L121.75 333.5 L121.75 348.5 L125.15 348.5 L125.34 347 L125.34 339 L126.15 337 L126.34 333.5 L130.78 333.5 L130.78 333.5 L130.78 348.5 L134.18 348.5 L134.38 347 L134.38 339 L135.18 337 L135.38 333.5 L139.81 333.5 L139.81 333.5 L139.81 348.5 L143.22 348.5 L143.41 347 L143.41 339 L144.22 337 L144.41 333.5 L148.85 333.5 L148.85 333.5 L148.85 348.5 L152.25 348.5 L152.45 347 L152.45 339 L153.25 337 L153.45 333.5 L157.88 333.5 L157.88 333.5 L157.88 348.5 L161.28 348.5 L161.48 347 L161.48 339 L162.28 337 L162.48 333.5 L166.92 333.5 L166.92 333.5 L166.92 348.5 L170.32 348.5 L170.52 347 L170.52 339 L171.32 337 L171.52 333.5 L175.96 333.5 L175.95 333.5 L175.95 348.5 L179.35 348.5 L179.55 347 L179.55 339 L180.35 337 L180.55 333.5 L184.99 333.5 L184.99 333.5 L184.99 348.5 L188.39 348.5 L188.59 347 L188.59 339 L189.39 337 L189.59 333.5 L194.03 333.5 L194.03 333.5 L194.03 348.5 L197.43 348.5 L197.62 347 L197.62 339 L198.43 337 L198.62 333.5 L203.06 333.5 L203.06 333.5 L203.06 348.5 L206.46 348.5 L206.66 347 L206.66 339 L207.46 337 L207.66 333.5 L212.09 333.5 L212.09 333.5 L212.09 348.5 L215.50 348.5 L215.69 347 L215.69 339 L216.50 337 L216.69 333.5 L221.13 333.5 L221.13 333.5 L221.13 348.5 L224.53 348.5 L224.73 347 L224.73 339 L225.53 337 L225.73 333.5 L230.16 333.5 L230.16 333.5 L230.16 348.5 L233.56 348.5 L233.76 347 L233.76 339 L234.56 337 L234.76 333.5 L239.20 333.5 L239.20 333.5 L239.20 348.5 L242.60 348.5 L242.80 347 L242.80 339 L243.60 337 L243.80 333.5 L248.23 333.5 L248.24 333.5 L248.24 348.5 L251.64 348.5 L251.84 347 L251.84 339 L252.64 337 L252.84 333.5 L257.27 333.5 L257.27 333.5 L257.27 348.5 L260.67 348.5 L260.87 347 L260.87 339 L261.67 337 L261.87 333.5 L266.31 333.5 L266.31 333.5 L266.31 348.5 L269.70 348.5 L269.91 347 L269.91 339 L270.70 337 L270.91 333.5 L275.34 333.5 L275.34 333.5 L275.34 348.5 L278.74 348.5 L278.94 347 L278.94 339 L279.74 337 L279.94 333.5 L284.38 333.5 L284.38 333.5 L284.38 348.5 L287.77 348.5 L287.98 347 L287.98 339 L288.77 337 L288.98 333.5 L293.41 333.5 L293.41 333.5 L293.41 348.5 L296.81 348.5 L297.01 347 L297.01 339 L297.81 337 L298.01 333.5 L302.44 333.5 L302.44 333.5 L302.44 348.5 L305.84 348.5 L306.05 347 L306.05 339 L306.84 337 L307.05 333.5 L311.48 333.5 L311.48 333.5 L311.48 348.5 L314.88 348.5 L315.08 347 L315.08 339 L315.88 337 L316.08 333.5 L320.52 333.5 L320.51 333.5 L320.51 348.5 L323.91 348.5 L324.12 347 L324.12 339 L324.91 337 L325.12 333.5 L329.55 333.5 L329.55 333.5 L329.55 348.5 L332.95 348.5 L333.15 347 L333.15 339 L333.95 337 L334.15 333.5 L338.59 333.5 L338.58 333.5 L338.58 348.5 L341.98 348.5 L342.19 347 L342.19 339 L342.98 337 L343.19 333.5 L347.62 333.5 L347.62 333.5 L347.62 348.5 L351.02 348.5 L351.22 347 L351.22 339 L352.02 337 L352.22 333.5 L356.66 333.5 L356.66 333.5 L356.66 348.5 L360.06 348.5 L360.26 347 L360.26 339 L361.06 337 L361.26 333.5 L365.69 333.5 L365.69 333.5 L365.69 348.5 L369.09 348.5 L369.29 347 L369.29 339 L370.09 337 L370.29 333.5 L374.73 333.5 L374.73 333.5 L374.73 348.5 L378.12 348.5 L378.33 347 L378.33 339 L379.12 337 L379.33 333.5 L383.76 333.5 L383.76 333.5 L383.76 348.5 L387.16 348.5 L387.36 347 L387.36 339 L388.16 337 L388.36 333.5 L392.80 333.5 L392.80 333.5 L392.80 348.5 L396.19 348.5 L396.40 347 L396.40 339 L397.19 337 L397.40 333.5 L401.83 333.5 L401.83 333.5 L401.83 348.5 L405.23 348.5 L405.43 347 L405.43 339 L406.23 337 L406.43 333.5 L410.87 333.5 L410.87 333.5 L410.87 348.5 L414.26 348.5 L414.47 347 L414.47 339 L415.26 337 L415.47 333.5 L419.90 333.5 L419.90 333.5 L419.90 348.5 L423.30 348.5 L423.50 347 L423.50 339 L424.30 337 L424.50 333.5 L428.94 333.5 L428.94 333.5 L428.94 348.5 L432.33 348.5 L432.54 347 L432.54 339 L433.33 337 L433.54 333.5 L437.97 333.5 L437.97 333.5 L437.97 348.5 L441.37 348.5 L441.57 347 L441.57 339 L442.37 337 L442.57 333.5 L447.01 333.5 L447.00 333.5 L447.00 348.5 L450.40 348.5 L450.61 347 L450.61 339 L451.40 337 L451.61 333.5 L456.04 333.5 L456.04 333.5 L456.04 348.5 L459.44 348.5 L459.64 347 L459.64 339 L460.44 337 L460.64 333.5 L465.08 333.5 L465.07 333.5 L465.07 348.5 L468.47 348.5 L468.68 347 L468.68 339 L469.47 337 L469.68 333.5 L474.11 333.5 L474.11 333.5 L474.11 348.5 L477.51 348.5 L477.71 347 L477.71 339 L478.51 337 L478.71 333.5 L483.15 333.5 L483.14 333.5 L483.14 348.5 L486.54 348.5 L486.75 347 L486.75 339 L487.54 337 L487.75 333.5 L492.18 333.5 L492.18 333.5 L492.18 348.5 L495.58 348.5 L495.78 347 L495.78 339 L496.58 337 L496.78 333.5 L497.50 333.5" stroke="#FF0000" fill="none" stroke-width="1.0" shape-rendering="crispEdges"/>
<path d="M57.5 441 L57.5 425 L59 418 L61.1 400.5 L65.52 444.5 L69.94 400.5 L74.36 444.5 L78.78 400.5 L83.20 444.5 L87.62 400.5 L92.04 444.5 L96.46 400.5 L100.88 444.5 L105.30 400.5 L109.72 444.5 L114.14 400.5 L118.56 444.5 L122.98 400.5 L127.40 444.5 L131.82 400.5 L136.24 444.5 L140.66 400.5 L145.08 444.5 L149.50 400.5 L153.92 444.5 L158.34 400.5 L162.76 444.5 L167.18 400.5 L171.60 444.5 L176.02 400.5 L180.44 444.5 L184.86 400.5 L189.28 444.5 L193.70 400.5 L198.12 444.5 L202.54 400.5 L206.96 444.5 L211.38 400.5 L215.80 444.5 L220.22 400.5 L224.64 444.5 L229.06 400.5 L233.48 444.5 L237.90 400.5 L242.32 444.5 L246.74 400.5 L251.16 444.5 L255.58 400.5 L260.00 444.5 L264.42 400.5 L268.84 444.5 L273.26 400.5 L277.68 444.5 L282.10 400.5 L286.52 444.5 L290.94 400.5 L295.36 444.5 L299.78 400.5 L304.20 444.5 L308.62 400.5 L313.04 444.5 L317.46 400.5 L321.88 444.5 L326.30 400.5 L330.72 444.5 L335.14 400.5 L339.56 444.5 L343.98 400.5 L348.40 444.5 L352.82 400.5 L357.24 444.5 L361.66 400.5 L366.08 444.5 L370.50 400.5 L374.92 444.5 L379.34 400.5 L383.76 444.5 L388.18 400.5 L392.60 444.5 L397.02 400.5 L401.44 444.5 L405.86 400.5 L410.28 444.5 L414.70 400.5 L419.12 444.5 L423.54 400.5 L427.96 444.5 L432.38 400.5 L436.80 444.5 L441.22 400.5 L445.64 444.5 L450.06 400.5 L454.48 444.5 L458.90 400.5 L463.32 444.5 L467.74 400.5 L472.16 444.5 L476.58 400.5 L481.00 444.5 L485.42 400.5 L489.84 444.5 L494.26 400.5 L497.5 432.75" stroke="#0000FF" fill="none" stroke-width="1.0" shape-rendering="crispEdges"/>
<path d="M681.5 170.5 L691.5 160.5 L705.5 160.5 L715.5 170.5 L705.5 180.5 L691.5 180.5 L681.5 170.5" stroke="#0000FF" stroke-width="1" fill="none"/>
<text x="697" y="177" font-family="Liberation Sans" font-size="15.5" font-weight="bold" fill="#000" text-anchor="start" textLength="9" lengthAdjust="spacingAndGlyphs" stroke="#000" stroke-width="0.8">F</text>
<path d="M715.5 170.5 L892.5 170.5 L892.5 205.5 L878.5 205.5" stroke="#0000FF" stroke-width="1" fill="none" shape-rendering="crispEdges"/>
<path d="M715.5 170.5 L715.5 195.5" stroke="#0000FF" stroke-width="1" fill="none" shape-rendering="crispEdges"/>
<path d="M715.5 195.5 L715.5 208.5" stroke="#000080" stroke-width="1" fill="none" shape-rendering="crispEdges"/>
<path d="M703.5 208.5 H727.5 M715.5 208.5 L703.5 226.5 H727.5 Z" stroke="#000080" fill="none"/>
<path d="M715.5 226.5 L715.5 240.5" stroke="#000080" stroke-width="1" fill="none" shape-rendering="crispEdges"/>
<path d="M715.5 240.5 L715.5 323.5" stroke="#0000FF" stroke-width="1" fill="none" shape-rendering="crispEdges"/>
<path d="M809.5 170.5 L809.5 195.5" stroke="#0000FF" stroke-width="1" fill="none" shape-rendering="crispEdges"/>
<path d="M809.5 195.5 L809.5 208.5" stroke="#000080" stroke-width="1" fill="none" shape-rendering="crispEdges"/>
<path d="M797.5 208.5 H821.5 M809.5 208.5 L797.5 226.5 H821.5 Z" stroke="#000080" fill="none"/>
<path d="M809.5 226.5 L809.5 240.5" stroke="#000080" stroke-width="1" fill="none" shape-rendering="crispEdges"/>
<path d="M809.5 240.5 L809.5 347.5" stroke="#0000FF" stroke-width="1" fill="none" shape-rendering="crispEdges"/>
<text x="746.3" y="232.2" font-family="Liberation Sans" font-size="21.5" font-weight="bold" fill="#0000C8" text-anchor="start" textLength="37.7" lengthAdjust="spacingAndGlyphs" stroke="#0000C8" stroke-width="0.8">NB!</text>
<path d="M715.5 276.5 L730.5 276.5" stroke="#000080" stroke-width="1" fill="none" shape-rendering="crispEdges"/>
<path d="M730.5 264.5 V288.5 L748.5 276.5 Z M748.5 264.5 V288.5" stroke="#000080" fill="none"/>
<path d="M748.5 276.5 L777.5 276.5" stroke="#000080" stroke-width="1" fill="none" shape-rendering="crispEdges"/>
<path d="M795.5 264.5 V288.5 L777.5 276.5 Z M777.5 264.5 V288.5" stroke="#000080" fill="none"/>
<path d="M795.5 276.5 L809.5 276.5" stroke="#000080" stroke-width="1" fill="none" shape-rendering="crispEdges"/>
<rect x="712" y="273" width="7" height="7" fill="#0000FF" shape-rendering="crispEdges"/>
<rect x="806" y="273" width="7" height="7" fill="#0000FF" shape-rendering="crispEdges"/>
<path d="M678.5 323.5 L688.5 313.5 L705.5 313.5 L715.5 323.5 L705.5 333.5 L688.5 333.5 L678.5 323.5" stroke="#0000FF" stroke-width="1" fill="none"/>
<text x="693.2" y="329.4" font-family="Liberation Sans" font-size="15.5" font-weight="bold" fill="#000" text-anchor="start" textLength="11.6" lengthAdjust="spacingAndGlyphs" stroke="#000" stroke-width="0.8">A</text>
<path d="M715.5 323.5 L728.5 323.5" stroke="#0000FF" stroke-width="1" fill="none" shape-rendering="crispEdges"/>
<path d="M728.5 323.5 L733.5 323.5" stroke="#000080" stroke-width="1" fill="none" shape-rendering="crispEdges"/>
<path d="M733.5 323.5 L739.5 311.5 L751.5 335.5 L763.5 311.5 L775.5 335.5 L781.5 323.5" stroke="#000080" stroke-width="1" fill="none"/>
<path d="M781.5 323.5 L786.5 323.5" stroke="#000080" stroke-width="1" fill="none" shape-rendering="crispEdges"/>
<path d="M786.5 323.5 L880.5 323.5" stroke="#0000FF" stroke-width="1" fill="none" shape-rendering="crispEdges"/>
<text x="745.7" y="307.7" font-family="Liberation Sans" font-size="15.5" font-weight="bold" fill="#000" text-anchor="start" textLength="20.3" lengthAdjust="spacingAndGlyphs" stroke="#000" stroke-width="0.8">R1</text>
<text x="746.8" y="351.6" font-family="Liberation Sans" font-size="15.5" font-weight="bold" fill="#000" text-anchor="start" textLength="18.9" lengthAdjust="spacingAndGlyphs" stroke="#000" stroke-width="0.8">10</text>
<rect x="806" y="320" width="7" height="7" fill="#0000FF" shape-rendering="crispEdges"/>
<rect x="842" y="320" width="7" height="7" fill="#0000FF" shape-rendering="crispEdges"/>
<rect x="877" y="320" width="7" height="7" fill="#0000FF" shape-rendering="crispEdges"/>
<path d="M845.5 182.5 L845.5 405.5" stroke="#0000FF" stroke-width="1" fill="none" shape-rendering="crispEdges"/>
<path d="M845.5 182.5 L848.5 182.5" stroke="#0000FF" stroke-width="1" fill="none" shape-rendering="crispEdges"/>
<path d="M848.5 182.5 L851.5 182.5 L851.5 229.5" stroke="#000080" stroke-width="1" fill="none" shape-rendering="crispEdges"/>
<path d="M856.5 176.5 L856.5 188.5" stroke="#000080" stroke-width="1" fill="none" shape-rendering="crispEdges"/>
<path d="M856.5 199.5 L856.5 211.5" stroke="#000080" stroke-width="1" fill="none" shape-rendering="crispEdges"/>
<path d="M856.5 222.5 L856.5 235.5" stroke="#000080" stroke-width="1" fill="none" shape-rendering="crispEdges"/>
<path d="M856.5 182.5 L880.5 182.5 L880.5 170.5" stroke="#000080" stroke-width="1" fill="none" shape-rendering="crispEdges"/>
<path d="M856.5 205.5 L862.5 205.5" stroke="#000080" stroke-width="1" fill="none" shape-rendering="crispEdges"/>
<path d="M862.5 201.5 V208.5 L878.5 205.5 Z M862.5 205.5 H868.5" stroke="#000080" fill="none"/>
<path d="M856.5 229.5 L880.5 229.5 L880.5 246.5" stroke="#000080" stroke-width="1" fill="none" shape-rendering="crispEdges"/>
<rect x="877" y="167" width="7" height="7" fill="#0000FF" shape-rendering="crispEdges"/>
<rect x="806" y="167" width="7" height="7" fill="#0000FF" shape-rendering="crispEdges"/>
<path d="M880.5 246.5 L892.5 252.5 L868.5 264.5 L892.5 276.5 L868.5 288.5 L880.5 294.5" stroke="#000080" stroke-width="1" fill="none"/>
<path d="M880.5 294.5 L880.5 299.5" stroke="#000080" stroke-width="1" fill="none" shape-rendering="crispEdges"/>
<path d="M880.5 299.5 L880.5 323.5" stroke="#0000FF" stroke-width="1" fill="none" shape-rendering="crispEdges"/>
<text x="895.6" y="264.9" font-family="Liberation Sans" font-size="15.5" font-weight="bold" fill="#000" text-anchor="start" textLength="21.3" lengthAdjust="spacingAndGlyphs" stroke="#000" stroke-width="0.8">R2</text>
<text x="895.2" y="291.8" font-family="Liberation Sans" font-size="15.5" font-weight="bold" fill="#000" text-anchor="start" textLength="9" lengthAdjust="spacingAndGlyphs" stroke="#000" stroke-width="0.8">9</text>
<path d="M880.5 323.5 L886.5 323.5" stroke="#000080" stroke-width="1" fill="none" shape-rendering="crispEdges"/>
<path d="M886.5 323.5 L892.5 311.5 L904.5 335.5 L916.5 311.5 L928.5 335.5 L934.5 323.5" stroke="#000080" stroke-width="1" fill="none"/>
<path d="M934.5 323.5 L939.5 323.5" stroke="#000080" stroke-width="1" fill="none" shape-rendering="crispEdges"/>
<path d="M939.5 323.5 L949.5 313.5 L966.5 313.5 L976.5 323.5 L966.5 333.5 L949.5 333.5 L939.5 323.5" stroke="#0000FF" stroke-width="1" fill="none"/>
<text x="948.9" y="329.9" font-family="Liberation Sans" font-size="16" font-weight="bold" fill="#000" text-anchor="start" textLength="11.2" lengthAdjust="spacingAndGlyphs" stroke="#000" stroke-width="0.8">X</text>
<text x="898.8" y="307.8" font-family="Liberation Sans" font-size="15.5" font-weight="bold" fill="#000" text-anchor="start" textLength="20.7" lengthAdjust="spacingAndGlyphs" stroke="#000" stroke-width="0.8">R3</text>
<text x="904.8" y="351.6" font-family="Liberation Sans" font-size="15.5" font-weight="bold" fill="#000" text-anchor="start" textLength="8.7" lengthAdjust="spacingAndGlyphs" stroke="#000" stroke-width="0.8">1</text>
<path d="M809.5 347.5 L809.5 361.5" stroke="#000080" stroke-width="1" fill="none" shape-rendering="crispEdges"/>
<path d="M797.5 361.5 H821.5 M809.5 361.5 L797.5 379.5 H821.5 Z" stroke="#000080" fill="none"/>
<path d="M809.5 379.5 L809.5 393.5" stroke="#000080" stroke-width="1" fill="none" shape-rendering="crispEdges"/>
<path d="M809.5 393.5 L809.5 417.5" stroke="#0000FF" stroke-width="1" fill="none" shape-rendering="crispEdges"/>
<path d="M845.5 405.5 L848.5 405.5" stroke="#0000FF" stroke-width="1" fill="none" shape-rendering="crispEdges"/>
<path d="M848.5 405.5 L851.5 405.5 L851.5 358.5" stroke="#000080" stroke-width="1" fill="none" shape-rendering="crispEdges"/>
<path d="M856.5 352.5 L856.5 365.5" stroke="#000080" stroke-width="1" fill="none" shape-rendering="crispEdges"/>
<path d="M856.5 376.5 L856.5 389.5" stroke="#000080" stroke-width="1" fill="none" shape-rendering="crispEdges"/>
<path d="M856.5 399.5 L856.5 412.5" stroke="#000080" stroke-width="1" fill="none" shape-rendering="crispEdges"/>
<path d="M856.5 358.5 L880.5 358.5 L880.5 347.5" stroke="#000080" stroke-width="1" fill="none" shape-rendering="crispEdges"/>
<path d="M880.5 347.5 L880.5 323.5" stroke="#0000FF" stroke-width="1" fill="none" shape-rendering="crispEdges"/>
<path d="M856.5 382.5 L858.5 382.5" stroke="#000080" stroke-width="1" fill="none" shape-rendering="crispEdges"/>
<path d="M858.5 382.5 L866.5 379.5 V385.5 Z M866.5 379.5 H874.5 V385.5 H866.5 M874.5 382.5 H880.5" stroke="#000080" fill="none"/>
<path d="M880.5 382.5 L892.5 382.5 L892.5 417.5" stroke="#0000FF" stroke-width="1" fill="none" shape-rendering="crispEdges"/>
<path d="M856.5 405.5 L880.5 405.5 L880.5 417.5" stroke="#000080" stroke-width="1" fill="none" shape-rendering="crispEdges"/>
<path d="M772.5 417.5 L782.5 407.5 L799.5 407.5 L809.5 417.5 L799.5 427.5 L782.5 427.5 L772.5 417.5" stroke="#0000FF" stroke-width="1" fill="none"/>
<text x="787.4" y="424.8" font-family="Liberation Sans" font-size="15.5" font-weight="bold" fill="#000" text-anchor="start" textLength="12.5" lengthAdjust="spacingAndGlyphs" stroke="#000" stroke-width="0.8">G</text>
<path d="M809.5 417.5 L892.5 417.5" stroke="#0000FF" stroke-width="1" fill="none" shape-rendering="crispEdges"/>
<rect x="877" y="414" width="7" height="7" fill="#0000FF" shape-rendering="crispEdges"/>
<text x="686.8" y="376.7" font-family="Liberation Sans" font-size="16" font-weight="bold" fill="#0000C8" text-anchor="start" textLength="75.2" lengthAdjust="spacingAndGlyphs" stroke="#0000C8" stroke-width="0.8">K561jtH2</text>
<text x="693.1" y="399.8" font-family="Liberation Sans" font-size="16" font-weight="bold" fill="#0000C8" text-anchor="start" textLength="61.6" lengthAdjust="spacingAndGlyphs" stroke="#0000C8" stroke-width="0.8">74HC04</text>
<text x="41.2" y="570.9" font-family="Liberation Sans" font-size="16.5" font-weight="bold" fill="#000" text-anchor="start" textLength="33.4" lengthAdjust="spacingAndGlyphs" stroke="#000" stroke-width="0.8">Vdd</text>
<path d="M45.5 575.5 L58.5 575.5 L58.5 594.5" stroke="#0000FF" stroke-width="1" fill="none" shape-rendering="crispEdges"/>
<circle cx="57.5" cy="619.3" r="25.2" stroke="#000080" fill="none" stroke-width="1"/>
<path d="M51.5 604.5 L65.5 604.5" stroke="#000080" stroke-width="1" fill="none" shape-rendering="crispEdges"/>
<path d="M58.5 597.5 L58.5 611.5" stroke="#000080" stroke-width="1" fill="none" shape-rendering="crispEdges"/>
<path d="M51.5 636.5 L65.5 636.5" stroke="#000080" stroke-width="1" fill="none" shape-rendering="crispEdges"/>
<path d="M58.5 645.5 L58.5 651.5" stroke="#000080" stroke-width="1" fill="none" shape-rendering="crispEdges"/>
<path d="M43.9 651.5 H73.1 L58.5 666.3 Z" stroke="#0000FF" fill="none" stroke-width="1"/>
<text x="77" y="594.8" font-family="Liberation Sans" font-size="16.5" font-weight="bold" fill="#000" text-anchor="start" textLength="22.9" lengthAdjust="spacingAndGlyphs" stroke="#000" stroke-width="0.8">V1</text>
<text x="77.9" y="616.9" font-family="Liberation Sans" font-size="16.5" font-weight="bold" fill="#000" text-anchor="start" textLength="82.6" lengthAdjust="spacingAndGlyphs" stroke="#000" stroke-width="0.8">Rser=1.8</text>
<text x="77.5" y="638" font-family="Liberation Sans" font-size="16.5" font-weight="bold" fill="#000" text-anchor="start" textLength="9.5" lengthAdjust="spacingAndGlyphs" stroke="#000" stroke-width="0.8">3</text>
<text x="36.2" y="762.4" font-family="Liberation Sans" font-size="16.5" font-weight="bold" fill="#000" text-anchor="start" textLength="43.8" lengthAdjust="spacingAndGlyphs" stroke="#000" stroke-width="0.8">TEST</text>
<path d="M45.5 767.5 L58.5 767.5 L58.5 786.5" stroke="#0000FF" stroke-width="1" fill="none" shape-rendering="crispEdges"/>
<circle cx="57.5" cy="811" r="25.2" stroke="#000080" fill="none" stroke-width="1"/>
<path d="M51.5 797.5 L65.5 797.5" stroke="#000080" stroke-width="1" fill="none" shape-rendering="crispEdges"/>
<path d="M58.5 790.5 L58.5 803.5" stroke="#000080" stroke-width="1" fill="none" shape-rendering="crispEdges"/>
<path d="M51.5 828.5 L65.5 828.5" stroke="#000080" stroke-width="1" fill="none" shape-rendering="crispEdges"/>
<path d="M58.5 836.5 L58.5 842.5" stroke="#000080" stroke-width="1" fill="none" shape-rendering="crispEdges"/>
<path d="M43.9 842.5 H73.1 L58.5 857.3 Z" stroke="#0000FF" fill="none" stroke-width="1"/>
<text x="77" y="785.8" font-family="Liberation Sans" font-size="16.5" font-weight="bold" fill="#000" text-anchor="start" textLength="23" lengthAdjust="spacingAndGlyphs" stroke="#000" stroke-width="0.8">V2</text>
<text x="77.5" y="808.6" font-family="Liberation Sans" font-size="16.5" font-weight="bold" fill="#000" text-anchor="start" textLength="77.2" lengthAdjust="spacingAndGlyphs" stroke="#000" stroke-width="0.8">Rser=24</text>
<text x="77.5" y="831" font-family="Liberation Sans" font-size="16.5" font-weight="bold" fill="#000" text-anchor="start" textLength="44.7" lengthAdjust="spacingAndGlyphs" stroke="#000" stroke-width="0.8">AC .1</text>
<text x="77.5" y="853" font-family="Liberation Sans" font-size="16.5" font-weight="bold" fill="#000" text-anchor="start" textLength="201.7" lengthAdjust="spacingAndGlyphs" stroke="#000" stroke-width="0.8">PULSE(0 3 .1m 1 1 0 2)</text>
<rect x="90.5" y="655.5" width="89" height="45" fill="none" stroke="#000080" shape-rendering="crispEdges"/>
<path d="M93.5 655.5 V652 Q96.5 646.5 99.5 652 V655.5" stroke="#000080" fill="none"/>
<path d="M93.5 700.5 V703 Q96.5 709 99.5 703 V700.5" stroke="#000080" fill="none"/>
<path d="M106.5 655.5 V652 Q109.5 646.5 112.5 652 V655.5" stroke="#000080" fill="none"/>
<path d="M106.5 700.5 V703 Q109.5 709 112.5 703 V700.5" stroke="#000080" fill="none"/>
<path d="M119.5 655.5 V652 Q122.5 646.5 125.5 652 V655.5" stroke="#000080" fill="#FFFFFF"/>
<path d="M119.5 700.5 V703 Q122.5 709 125.5 703 V700.5" stroke="#000080" fill="none"/>
<path d="M132.5 655.5 V652 Q135.5 646.5 138.5 652 V655.5" stroke="#000080" fill="none"/>
<path d="M132.5 700.5 V703 Q135.5 709 138.5 703 V700.5" stroke="#000080" fill="none"/>
<path d="M144.5 655.5 V652 Q147.5 646.5 150.5 652 V655.5" stroke="#000080" fill="#FFFFFF"/>
<path d="M144.5 700.5 V703 Q147.5 709 150.5 703 V700.5" stroke="#000080" fill="none"/>
<path d="M157.5 655.5 V652 Q160.5 646.5 163.5 652 V655.5" stroke="#000080" fill="none"/>
<path d="M157.5 700.5 V703 Q160.5 709 163.5 703 V700.5" stroke="#000080" fill="none"/>
<path d="M170.5 655.5 V652 Q173.5 646.5 176.5 652 V655.5" stroke="#000080" fill="none"/>
<path d="M170.5 700.5 V703 Q173.5 709 176.5 703 V700.5" stroke="#000080" fill="none"/>
<text x="106.5" y="684.7" font-family="Liberation Mono" font-size="20.5" font-weight="normal" fill="#000080" text-anchor="start" textLength="55.5" lengthAdjust="spacingAndGlyphs" font-weight="normal">74HC04</text>
<circle cx="102.3" cy="683.4" r="2.8" stroke="#000080" fill="none" stroke-width="1"/>
<text transform="translate(99.2,670.5) rotate(-90)" font-family="Liberation Sans" font-size="7.5" font-weight="normal" fill="#000080" textLength="12" lengthAdjust="spacingAndGlyphs">Vc</text>
<text transform="translate(99.2,697) rotate(-90)" font-family="Liberation Sans" font-size="7.5" font-weight="normal" fill="#000080" textLength="12" lengthAdjust="spacingAndGlyphs">A1</text>
<text transform="translate(112.2,670.5) rotate(-90)" font-family="Liberation Sans" font-size="7.5" font-weight="normal" fill="#000080" textLength="12" lengthAdjust="spacingAndGlyphs">A6</text>
<text transform="translate(112.2,697) rotate(-90)" font-family="Liberation Sans" font-size="7.5" font-weight="normal" fill="#000080" textLength="12" lengthAdjust="spacingAndGlyphs">Q1</text>
<text transform="translate(125.2,670.5) rotate(-90)" font-family="Liberation Sans" font-size="7.5" font-weight="normal" fill="#000080" textLength="12" lengthAdjust="spacingAndGlyphs">Q6</text>
<text transform="translate(125.2,697) rotate(-90)" font-family="Liberation Sans" font-size="7.5" font-weight="normal" fill="#000080" textLength="12" lengthAdjust="spacingAndGlyphs">A2</text>
<text transform="translate(138.2,670.5) rotate(-90)" font-family="Liberation Sans" font-size="7.5" font-weight="normal" fill="#000080" textLength="12" lengthAdjust="spacingAndGlyphs">A5</text>
<text transform="translate(138.2,697) rotate(-90)" font-family="Liberation Sans" font-size="7.5" font-weight="normal" fill="#000080" textLength="12" lengthAdjust="spacingAndGlyphs">Q2</text>
<text transform="translate(150.2,670.5) rotate(-90)" font-family="Liberation Sans" font-size="7.5" font-weight="normal" fill="#000080" textLength="12" lengthAdjust="spacingAndGlyphs">Q5</text>
<text transform="translate(150.2,697) rotate(-90)" font-family="Liberation Sans" font-size="7.5" font-weight="normal" fill="#000080" textLength="12" lengthAdjust="spacingAndGlyphs">A3</text>
<text transform="translate(163.2,670.5) rotate(-90)" font-family="Liberation Sans" font-size="7.5" font-weight="normal" fill="#000080" textLength="12" lengthAdjust="spacingAndGlyphs">A4</text>
<text transform="translate(163.2,697) rotate(-90)" font-family="Liberation Sans" font-size="7.5" font-weight="normal" fill="#000080" textLength="12" lengthAdjust="spacingAndGlyphs">Q3</text>
<text transform="translate(176.2,670.5) rotate(-90)" font-family="Liberation Sans" font-size="7.5" font-weight="normal" fill="#000080" textLength="12" lengthAdjust="spacingAndGlyphs">Q4</text>
<text transform="translate(176.2,697) rotate(-90)" font-family="Liberation Sans" font-size="7.5" font-weight="normal" fill="#000080" textLength="12" lengthAdjust="spacingAndGlyphs">Vs</text>
<path d="M96.5 649.5 L96.5 626.5 L225.5 626.5 L225.5 639.5 L280.5 639.5" stroke="#0000FF" stroke-width="1" fill="none" shape-rendering="crispEdges"/>
<path d="M109.5 649.5 L109.5 639.5 L135.5 639.5 L135.5 652.5" stroke="#0000FF" stroke-width="1" fill="none" shape-rendering="crispEdges"/>
<path d="M160.5 649.5 L160.5 639.5 L185.5 639.5 L185.5 741.5 L160.5 741.5 L160.5 707.5" stroke="#0000FF" stroke-width="1" fill="none" shape-rendering="crispEdges"/>
<rect x="132" y="649" width="7" height="7" fill="#0000FF" shape-rendering="crispEdges"/>
<rect x="182" y="649" width="7" height="7" fill="#0000FF" shape-rendering="crispEdges"/>
<path d="M135.5 652.5 L175.5 690.5" stroke="#0000FF" stroke-width="1" fill="none"/>
<path d="M173.5 664.5 L197.5 690.5 L249.5 690.5" stroke="#0000FF" stroke-width="1" fill="none"/>
<path d="M185.5 652.5 L197.5 664.5 L249.5 664.5" stroke="#0000FF" stroke-width="1" fill="none"/>
<path d="M173.5 649.5 L173.5 805.5" stroke="#0000FF" stroke-width="1" fill="none" shape-rendering="crispEdges"/>
<rect x="170" y="701" width="7" height="7" fill="#0000FF" shape-rendering="crispEdges"/>
<path d="M159.0 805.5 H188.0 L173.5 819.7 Z" stroke="#0000FF" fill="none" stroke-width="1"/>
<path d="M187.5 805.5 L479.5 805.5" stroke="#0000FF" stroke-width="1" fill="none" shape-rendering="crispEdges"/>
<path d="M45.5 728.5 L96.5 728.5 L96.5 707.5" stroke="#0000FF" stroke-width="1" fill="none" shape-rendering="crispEdges"/>
<path d="M109.5 707.5 L109.5 728.5 L218.5 728.5" stroke="#0000FF" stroke-width="1" fill="none" shape-rendering="crispEdges"/>
<path d="M122.5 707.5 L122.5 779.5 L275.5 779.5 L275.5 728.5" stroke="#0000FF" stroke-width="1" fill="none" shape-rendering="crispEdges"/>
<path d="M135.5 707.5 L135.5 715.5 L280.5 715.5" stroke="#0000FF" stroke-width="1" fill="none" shape-rendering="crispEdges"/>
<path d="M147.5 707.5 L147.5 767.5 L338.5 767.5 L338.5 715.5" stroke="#0000FF" stroke-width="1" fill="none" shape-rendering="crispEdges"/>
<rect x="272" y="725" width="7" height="7" fill="#0000FF" shape-rendering="crispEdges"/>
<rect x="335" y="712" width="7" height="7" fill="#0000FF" shape-rendering="crispEdges"/>
<path d="M218.5 728.5 L225.1 715.9 L238.3 741.1 L251.5 715.9 L264.7 741.1 L271.2 728.5" stroke="#000080" stroke-width="1" fill="none"/>
<path d="M271.5 728.5 L389.5 728.5" stroke="#0000FF" stroke-width="1" fill="none" shape-rendering="crispEdges"/>
<path d="M280.5 715.5 L287.1 702.9 L300.3 728.1 L313.5 702.9 L326.7 728.1 L333.2 715.5" stroke="#000080" stroke-width="1" fill="none"/>
<path d="M333.5 715.5 L479.5 715.5" stroke="#0000FF" stroke-width="1" fill="none" shape-rendering="crispEdges"/>
<path d="M280.5 639.5 L287.1 626.9 L300.3 652.1 L313.5 626.9 L326.7 652.1 L333.2 639.5" stroke="#000080" stroke-width="1" fill="none"/>
<path d="M333.5 639.5 L479.5 639.5 L479.5 644.5" stroke="#0000FF" stroke-width="1" fill="none" shape-rendering="crispEdges"/>
<rect x="386" y="636" width="7" height="7" fill="#0000FF" shape-rendering="crispEdges"/>
<rect x="386" y="725" width="7" height="7" fill="#0000FF" shape-rendering="crispEdges"/>
<rect x="476" y="712" width="7" height="7" fill="#0000FF" shape-rendering="crispEdges"/>
<rect x="386" y="802" width="7" height="7" fill="#0000FF" shape-rendering="crispEdges"/>
<path d="M389.5 639.5 L389.5 644.5" stroke="#0000FF" stroke-width="1" fill="none" shape-rendering="crispEdges"/>
<path d="M389.5 644.5 L402.1 651.1 L376.9 664.3 L402.1 677.5 L376.9 690.7 L389.5 697.2" stroke="#000080" stroke-width="1" fill="none"/>
<path d="M389.5 697.5 L389.5 752.5" stroke="#0000FF" stroke-width="1" fill="none" shape-rendering="crispEdges"/>
<path d="M479.5 644.5 L492.1 651.1 L466.9 664.3 L492.1 677.5 L466.9 690.7 L479.5 697.2" stroke="#000080" stroke-width="1" fill="none"/>
<path d="M479.5 697.5 L479.5 752.5" stroke="#0000FF" stroke-width="1" fill="none" shape-rendering="crispEdges"/>
<path d="M389.5 752.5 L402.1 759.1 L376.9 772.3 L402.1 785.5 L376.9 798.7 L389.5 805.2" stroke="#000080" stroke-width="1" fill="none"/>
<path d="M389.5 805.5 L389.5 805.5" stroke="#0000FF" stroke-width="1" fill="none" shape-rendering="crispEdges"/>
<path d="M479.5 752.5 L492.1 759.1 L466.9 772.3 L492.1 785.5 L466.9 798.7 L479.5 805.2" stroke="#000080" stroke-width="1" fill="none"/>
<path d="M479.5 805.5 L479.5 805.5" stroke="#0000FF" stroke-width="1" fill="none" shape-rendering="crispEdges"/>
<path d="M389.5 697.5 L389.5 700.5" stroke="#000080" stroke-width="1" fill="none" shape-rendering="crispEdges"/>
<text x="36.2" y="723.1" font-family="Liberation Sans" font-size="16.5" font-weight="bold" fill="#000" text-anchor="start" textLength="43.8" lengthAdjust="spacingAndGlyphs" stroke="#000" stroke-width="0.8">TEST</text>
<text x="207.2" y="659.4" font-family="Liberation Sans" font-size="16.5" font-weight="bold" fill="#000" text-anchor="start" textLength="33.6" lengthAdjust="spacingAndGlyphs" stroke="#000" stroke-width="0.8">CT0</text>
<text x="207.2" y="685.1" font-family="Liberation Sans" font-size="16.5" font-weight="bold" fill="#000" text-anchor="start" textLength="33.6" lengthAdjust="spacingAndGlyphs" stroke="#000" stroke-width="0.8">CT1</text>
<text x="233.5" y="634.4" font-family="Liberation Sans" font-size="16.5" font-weight="bold" fill="#000" text-anchor="start" textLength="30.8" lengthAdjust="spacingAndGlyphs" stroke="#000" stroke-width="0.8">NB!</text>
<text x="294.6" y="621.7" font-family="Liberation Sans" font-size="16.5" font-weight="bold" fill="#000" text-anchor="start" textLength="22.8" lengthAdjust="spacingAndGlyphs" stroke="#000" stroke-width="0.8">R1</text>
<text x="275.7" y="669.7" font-family="Liberation Sans" font-size="16.5" font-weight="bold" fill="#000" text-anchor="start" textLength="59.3" lengthAdjust="spacingAndGlyphs" stroke="#000" stroke-width="0.8">51meg</text>
<text x="294.6" y="698.7" font-family="Liberation Sans" font-size="16.5" font-weight="bold" fill="#000" text-anchor="start" textLength="22.8" lengthAdjust="spacingAndGlyphs" stroke="#000" stroke-width="0.8">R7</text>
<text x="284.8" y="745" font-family="Liberation Sans" font-size="16.5" font-weight="bold" fill="#000" text-anchor="start" textLength="43.5" lengthAdjust="spacingAndGlyphs" stroke="#000" stroke-width="0.8">100k</text>
<text x="231.7" y="710.5" font-family="Liberation Sans" font-size="16.5" font-weight="bold" fill="#000" text-anchor="start" textLength="22.6" lengthAdjust="spacingAndGlyphs" stroke="#000" stroke-width="0.8">R4</text>
<text x="221.7" y="757.6" font-family="Liberation Sans" font-size="16.5" font-weight="bold" fill="#000" text-anchor="start" textLength="43.2" lengthAdjust="spacingAndGlyphs" stroke="#000" stroke-width="0.8">100k</text>
<text x="411.4" y="634.2" font-family="Liberation Sans" font-size="16.5" font-weight="bold" fill="#000" text-anchor="start" textLength="33.4" lengthAdjust="spacingAndGlyphs" stroke="#000" stroke-width="0.8">Vdd</text>
<text x="405.7" y="664.1" font-family="Liberation Sans" font-size="16.5" font-weight="bold" fill="#000" text-anchor="start" textLength="23" lengthAdjust="spacingAndGlyphs" stroke="#000" stroke-width="0.8">R2</text>
<text x="405.7" y="692.9" font-family="Liberation Sans" font-size="16.5" font-weight="bold" fill="#000" text-anchor="start" textLength="32.2" lengthAdjust="spacingAndGlyphs" stroke="#000" stroke-width="0.8">51k</text>
<text x="495.5" y="664.1" font-family="Liberation Sans" font-size="16.5" font-weight="bold" fill="#000" text-anchor="start" textLength="23" lengthAdjust="spacingAndGlyphs" stroke="#000" stroke-width="0.8">R3</text>
<text x="495.5" y="692.9" font-family="Liberation Sans" font-size="16.5" font-weight="bold" fill="#000" text-anchor="start" textLength="32.2" lengthAdjust="spacingAndGlyphs" stroke="#000" stroke-width="0.8">51k</text>
<text x="483.3" y="721.7" font-family="Liberation Sans" font-size="16.5" font-weight="bold" fill="#000" text-anchor="start" textLength="32.9" lengthAdjust="spacingAndGlyphs" stroke="#000" stroke-width="0.8">Vp1</text>
<text x="393" y="734.3" font-family="Liberation Sans" font-size="16.5" font-weight="bold" fill="#000" text-anchor="start" textLength="33.4" lengthAdjust="spacingAndGlyphs" stroke="#000" stroke-width="0.8">Vp0</text>
<text x="405.7" y="766.6" font-family="Liberation Sans" font-size="16.5" font-weight="bold" fill="#000" text-anchor="start" textLength="23" lengthAdjust="spacingAndGlyphs" stroke="#000" stroke-width="0.8">R5</text>
<text x="405.7" y="795.4" font-family="Liberation Sans" font-size="16.5" font-weight="bold" fill="#000" text-anchor="start" textLength="48.3" lengthAdjust="spacingAndGlyphs" stroke="#000" stroke-width="0.8">1meg</text>
<text x="495.5" y="766.6" font-family="Liberation Sans" font-size="16.5" font-weight="bold" fill="#000" text-anchor="start" textLength="23" lengthAdjust="spacingAndGlyphs" stroke="#000" stroke-width="0.8">R6</text>
<text x="495.5" y="795.4" font-family="Liberation Sans" font-size="16.5" font-weight="bold" fill="#000" text-anchor="start" textLength="20.7" lengthAdjust="spacingAndGlyphs" stroke="#000" stroke-width="0.8">1k</text>
<text x="177.7" y="798.8" font-family="Liberation Sans" font-size="16.5" font-weight="bold" fill="#000" text-anchor="start" textLength="200" lengthAdjust="spacingAndGlyphs" stroke="#000" stroke-width="0.8">.tran 0 .1k 0 .1 startup</text>
<path d="M715.5 563.5 L731.5 580.5 L731.5 638.5 L715.5 654.5 L698.5 638.5 L698.5 580.5 L715.5 563.5" stroke="#0000FF" stroke-width="1" fill="none"/>
<text transform="translate(724.2,637.5) rotate(-90)" font-family="Liberation Sans" font-size="26.5" font-weight="bold" fill="#000" stroke="#000" stroke-width="0.9" textLength="51" lengthAdjust="spacingAndGlyphs">p14</text>
<path d="M752.5 563.5 L768.5 580.5 L768.5 638.5 L752.5 654.5 L735.5 638.5 L735.5 580.5 L752.5 563.5" stroke="#0000FF" stroke-width="1" fill="none"/>
<text transform="translate(761.1,637.5) rotate(-90)" font-family="Liberation Sans" font-size="26.5" font-weight="bold" fill="#000" stroke="#000" stroke-width="0.9" textLength="51" lengthAdjust="spacingAndGlyphs">p13</text>
<path d="M790.5 563.5 L806.5 580.5 L806.5 638.5 L790.5 654.5 L773.5 638.5 L773.5 580.5 L790.5 563.5" stroke="#0000FF" stroke-width="1" fill="none"/>
<text transform="translate(799.2,637.5) rotate(-90)" font-family="Liberation Sans" font-size="26.5" font-weight="bold" fill="#000" stroke="#000" stroke-width="0.9" textLength="51" lengthAdjust="spacingAndGlyphs">p12</text>
<path d="M827.5 563.5 L843.5 580.5 L843.5 638.5 L827.5 654.5 L810.5 638.5 L810.5 580.5 L827.5 563.5" stroke="#0000FF" stroke-width="1" fill="none"/>
<text transform="translate(836.3,637.5) rotate(-90)" font-family="Liberation Sans" font-size="26.5" font-weight="bold" fill="#000" stroke="#000" stroke-width="0.9" textLength="51" lengthAdjust="spacingAndGlyphs">p11</text>
<path d="M864.5 563.5 L880.5 580.5 L880.5 638.5 L864.5 654.5 L847.5 638.5 L847.5 580.5 L864.5 563.5" stroke="#0000FF" stroke-width="1" fill="none"/>
<text transform="translate(873.3,637.5) rotate(-90)" font-family="Liberation Sans" font-size="26.5" font-weight="bold" fill="#000" stroke="#000" stroke-width="0.9" textLength="51" lengthAdjust="spacingAndGlyphs">p10</text>
<path d="M902.5 580.5 L918.5 598.5 L918.5 638.5 L902.5 654.5 L885.5 638.5 L885.5 598.5 L902.5 580.5" stroke="#0000FF" stroke-width="1" fill="none"/>
<text transform="translate(911.1,637.5) rotate(-90)" font-family="Liberation Sans" font-size="26.5" font-weight="bold" fill="#000" stroke="#000" stroke-width="0.9" textLength="33.5" lengthAdjust="spacingAndGlyphs">p9</text>
<path d="M939.5 580.5 L955.5 598.5 L955.5 638.5 L939.5 654.5 L922.5 638.5 L922.5 598.5 L939.5 580.5" stroke="#0000FF" stroke-width="1" fill="none"/>
<text transform="translate(948.3,637.5) rotate(-90)" font-family="Liberation Sans" font-size="26.5" font-weight="bold" fill="#000" stroke="#000" stroke-width="0.9" textLength="33.5" lengthAdjust="spacingAndGlyphs">p8</text>
<path d="M715.5 766.5 L731.5 782.5 L731.5 824.5 L715.5 841.5 L698.5 824.5 L698.5 782.5 L715.5 766.5" stroke="#0000FF" stroke-width="1" fill="none"/>
<text transform="translate(724.3,815.8) rotate(-90)" font-family="Liberation Sans" font-size="26.5" font-weight="bold" fill="#000" stroke="#000" stroke-width="0.9" textLength="33.5" lengthAdjust="spacingAndGlyphs">p1</text>
<path d="M752.5 766.5 L768.5 782.5 L768.5 824.5 L752.5 841.5 L735.5 824.5 L735.5 782.5 L752.5 766.5" stroke="#0000FF" stroke-width="1" fill="none"/>
<text transform="translate(761.3,815.8) rotate(-90)" font-family="Liberation Sans" font-size="26.5" font-weight="bold" fill="#000" stroke="#000" stroke-width="0.9" textLength="33.5" lengthAdjust="spacingAndGlyphs">p2</text>
<path d="M790.5 766.5 L806.5 782.5 L806.5 824.5 L790.5 841.5 L773.5 824.5 L773.5 782.5 L790.5 766.5" stroke="#0000FF" stroke-width="1" fill="none"/>
<text transform="translate(799.1,815.8) rotate(-90)" font-family="Liberation Sans" font-size="26.5" font-weight="bold" fill="#000" stroke="#000" stroke-width="0.9" textLength="33.5" lengthAdjust="spacingAndGlyphs">p3</text>
<path d="M827.5 766.5 L843.5 782.5 L843.5 824.5 L827.5 841.5 L810.5 824.5 L810.5 782.5 L827.5 766.5" stroke="#0000FF" stroke-width="1" fill="none"/>
<text transform="translate(836.2,815.8) rotate(-90)" font-family="Liberation Sans" font-size="26.5" font-weight="bold" fill="#000" stroke="#000" stroke-width="0.9" textLength="33.5" lengthAdjust="spacingAndGlyphs">p4</text>
<path d="M864.5 766.5 L880.5 782.5 L880.5 824.5 L864.5 841.5 L847.5 824.5 L847.5 782.5 L864.5 766.5" stroke="#0000FF" stroke-width="1" fill="none"/>
<text transform="translate(873.5,815.8) rotate(-90)" font-family="Liberation Sans" font-size="26.5" font-weight="bold" fill="#000" stroke="#000" stroke-width="0.9" textLength="33.5" lengthAdjust="spacingAndGlyphs">p5</text>
<path d="M902.5 766.5 L918.5 782.5 L918.5 824.5 L902.5 841.5 L885.5 824.5 L885.5 782.5 L902.5 766.5" stroke="#0000FF" stroke-width="1" fill="none"/>
<text transform="translate(910.9,815.8) rotate(-90)" font-family="Liberation Sans" font-size="26.5" font-weight="bold" fill="#000" stroke="#000" stroke-width="0.9" textLength="33.5" lengthAdjust="spacingAndGlyphs">p6</text>
<path d="M939.5 766.5 L955.5 782.5 L955.5 824.5 L939.5 841.5 L922.5 824.5 L922.5 782.5 L939.5 766.5" stroke="#0000FF" stroke-width="1" fill="none"/>
<text transform="translate(948.6,815.8) rotate(-90)" font-family="Liberation Sans" font-size="26.5" font-weight="bold" fill="#000" stroke="#000" stroke-width="0.9" textLength="33.5" lengthAdjust="spacingAndGlyphs">p7</text>
<path d="M920.5 681.5 L920.5 673.5 L696.5 673.5 L696.5 747.5 L940.5 747.5 L940.5 766.5" stroke="#0000FF" stroke-width="1" fill="none" shape-rendering="crispEdges"/>
<path d="M715.5 654.5 L715.5 710.5 L921.5 710.5 L921.5 703.5" stroke="#0000FF" stroke-width="1" fill="none" shape-rendering="crispEdges"/>
<path d="M757.5 675.5 V708.5 L786.0 691.5 Z" stroke="#000080" fill="none"/>
<circle cx="790.0" cy="691.5" r="4" stroke="#000080" fill="none"/>
<path d="M771.5 678 V682.5 M772 681.5 H781 M771.5 705 V701 M772 702.5 H781 M776.5 698 V707" stroke="#000080" fill="none"/>
<text transform="translate(769,688) scale(1,-1)" font-family="Liberation Sans" font-size="8" font-weight="bold" fill="#000080" text-anchor="middle" textLength="13" lengthAdjust="spacingAndGlyphs">NOT</text>
<path d="M759.5 705.5 L766.5 700.5 M760.5 702.5 H765.5 M762.5 699.5 V704.5" stroke="#000080" fill="none" stroke-width="0.9"/>
<path d="M752.5 654.5 L752.5 691.5 L757.5 691.5" stroke="#0000FF" stroke-width="1" fill="none" shape-rendering="crispEdges"/>
<path d="M790.5 654.5 L790.5 687.5" stroke="#0000FF" stroke-width="1" fill="none" shape-rendering="crispEdges"/>
<path d="M832.5 675.5 V708.5 L861.0 691.5 Z" stroke="#000080" fill="none"/>
<circle cx="865.0" cy="691.5" r="4" stroke="#000080" fill="none"/>
<path d="M846.5 678 V682.5 M847 681.5 H856 M846.5 705 V701 M847 702.5 H856 M851.5 698 V707" stroke="#000080" fill="none"/>
<text transform="translate(844,688) scale(1,-1)" font-family="Liberation Sans" font-size="8" font-weight="bold" fill="#000080" text-anchor="middle" textLength="13" lengthAdjust="spacingAndGlyphs">NOT</text>
<path d="M834.5 705.5 L841.5 700.5 M835.5 702.5 H840.5 M837.5 699.5 V704.5" stroke="#000080" fill="none" stroke-width="0.9"/>
<path d="M827.5 654.5 L827.5 691.5 L832.5 691.5" stroke="#0000FF" stroke-width="1" fill="none" shape-rendering="crispEdges"/>
<path d="M864.5 654.5 L864.5 687.5" stroke="#0000FF" stroke-width="1" fill="none" shape-rendering="crispEdges"/>
<path d="M907.5 675.5 V708.5 L936.0 691.5 Z" stroke="#000080" fill="none"/>
<circle cx="940.0" cy="691.5" r="4" stroke="#000080" fill="none"/>
<path d="M921.5 678 V682.5 M922 681.5 H931 M921.5 705 V701 M922 702.5 H931 M926.5 698 V707" stroke="#000080" fill="none"/>
<text transform="translate(919,688) scale(1,-1)" font-family="Liberation Sans" font-size="8" font-weight="bold" fill="#000080" text-anchor="middle" textLength="13" lengthAdjust="spacingAndGlyphs">NOT</text>
<path d="M909.5 705.5 L916.5 700.5 M910.5 702.5 H915.5 M912.5 699.5 V704.5" stroke="#000080" fill="none" stroke-width="0.9"/>
<path d="M902.5 654.5 L902.5 691.5 L907.5 691.5" stroke="#0000FF" stroke-width="1" fill="none" shape-rendering="crispEdges"/>
<path d="M939.5 654.5 L939.5 687.5" stroke="#0000FF" stroke-width="1" fill="none" shape-rendering="crispEdges"/>
<rect x="766.5" y="668" width="11" height="11" fill="#0000FF" shape-rendering="crispEdges"/>
<rect x="766.5" y="705" width="11" height="11" fill="#0000FF" shape-rendering="crispEdges"/>
<rect x="841.5" y="668" width="11" height="11" fill="#0000FF" shape-rendering="crispEdges"/>
<rect x="841.5" y="705" width="11" height="11" fill="#0000FF" shape-rendering="crispEdges"/>
<path d="M720.5 712.5 V745.5 L749.0 729.5 Z" stroke="#000080" fill="none"/>
<circle cx="753.0" cy="729.5" r="4" stroke="#000080" fill="none"/>
<path d="M734.9 716 V720 M735.4 718.5 H744.4 M739.9 714 V723 M734.9 742 V739 M735.4 740.5 H744.4" stroke="#000080" fill="none"/>
<text x="732" y="732.5" font-family="Liberation Sans" font-size="8" font-weight="bold" fill="#000080" text-anchor="middle" textLength="13" lengthAdjust="spacingAndGlyphs">NOT</text>
<path d="M722.5 714.5 L729.5 719.5 M723.5 719.5 H728.5 M723.5 721.5 H727.5 M725.5 717.5 V723" stroke="#000080" fill="none" stroke-width="0.9"/>
<path d="M715.5 766.5 L715.5 729.5 L720.5 729.5" stroke="#0000FF" stroke-width="1" fill="none" shape-rendering="crispEdges"/>
<path d="M752.5 733.5 L752.5 766.5" stroke="#0000FF" stroke-width="1" fill="none" shape-rendering="crispEdges"/>
<rect x="729.4" y="705" width="11" height="11" fill="#0000FF" shape-rendering="crispEdges"/>
<rect x="729.4" y="742" width="11" height="11" fill="#0000FF" shape-rendering="crispEdges"/>
<path d="M795.5 712.5 V745.5 L824.0 729.5 Z" stroke="#000080" fill="none"/>
<circle cx="828.0" cy="729.5" r="4" stroke="#000080" fill="none"/>
<path d="M808.7 716 V720 M809.2 718.5 H818.2 M813.7 714 V723 M808.7 742 V739 M809.2 740.5 H818.2" stroke="#000080" fill="none"/>
<text x="807" y="732.5" font-family="Liberation Sans" font-size="8" font-weight="bold" fill="#000080" text-anchor="middle" textLength="13" lengthAdjust="spacingAndGlyphs">NOT</text>
<path d="M797.5 714.5 L804.5 719.5 M798.5 719.5 H803.5 M798.5 721.5 H802.5 M800.5 717.5 V723" stroke="#000080" fill="none" stroke-width="0.9"/>
<path d="M790.5 766.5 L790.5 729.5 L795.5 729.5" stroke="#0000FF" stroke-width="1" fill="none" shape-rendering="crispEdges"/>
<path d="M827.5 733.5 L827.5 766.5" stroke="#0000FF" stroke-width="1" fill="none" shape-rendering="crispEdges"/>
<rect x="803.2" y="705" width="11" height="11" fill="#0000FF" shape-rendering="crispEdges"/>
<rect x="803.2" y="742" width="11" height="11" fill="#0000FF" shape-rendering="crispEdges"/>
<path d="M869.5 712.5 V745.5 L898.0 729.5 Z" stroke="#000080" fill="none"/>
<circle cx="902.0" cy="729.5" r="4" stroke="#000080" fill="none"/>
<path d="M884.0 716 V720 M884.5 718.5 H893.5 M889.0 714 V723 M884.0 742 V739 M884.5 740.5 H893.5" stroke="#000080" fill="none"/>
<text x="881" y="732.5" font-family="Liberation Sans" font-size="8" font-weight="bold" fill="#000080" text-anchor="middle" textLength="13" lengthAdjust="spacingAndGlyphs">NOT</text>
<path d="M871.5 714.5 L878.5 719.5 M872.5 719.5 H877.5 M872.5 721.5 H876.5 M874.5 717.5 V723" stroke="#000080" fill="none" stroke-width="0.9"/>
<path d="M864.5 766.5 L864.5 729.5 L869.5 729.5" stroke="#0000FF" stroke-width="1" fill="none" shape-rendering="crispEdges"/>
<path d="M902.5 733.5 L902.5 766.5" stroke="#0000FF" stroke-width="1" fill="none" shape-rendering="crispEdges"/>
<rect x="878.5" y="705" width="11" height="11" fill="#0000FF" shape-rendering="crispEdges"/>
<rect x="878.5" y="742" width="11" height="11" fill="#0000FF" shape-rendering="crispEdges"/></svg></body></html>
